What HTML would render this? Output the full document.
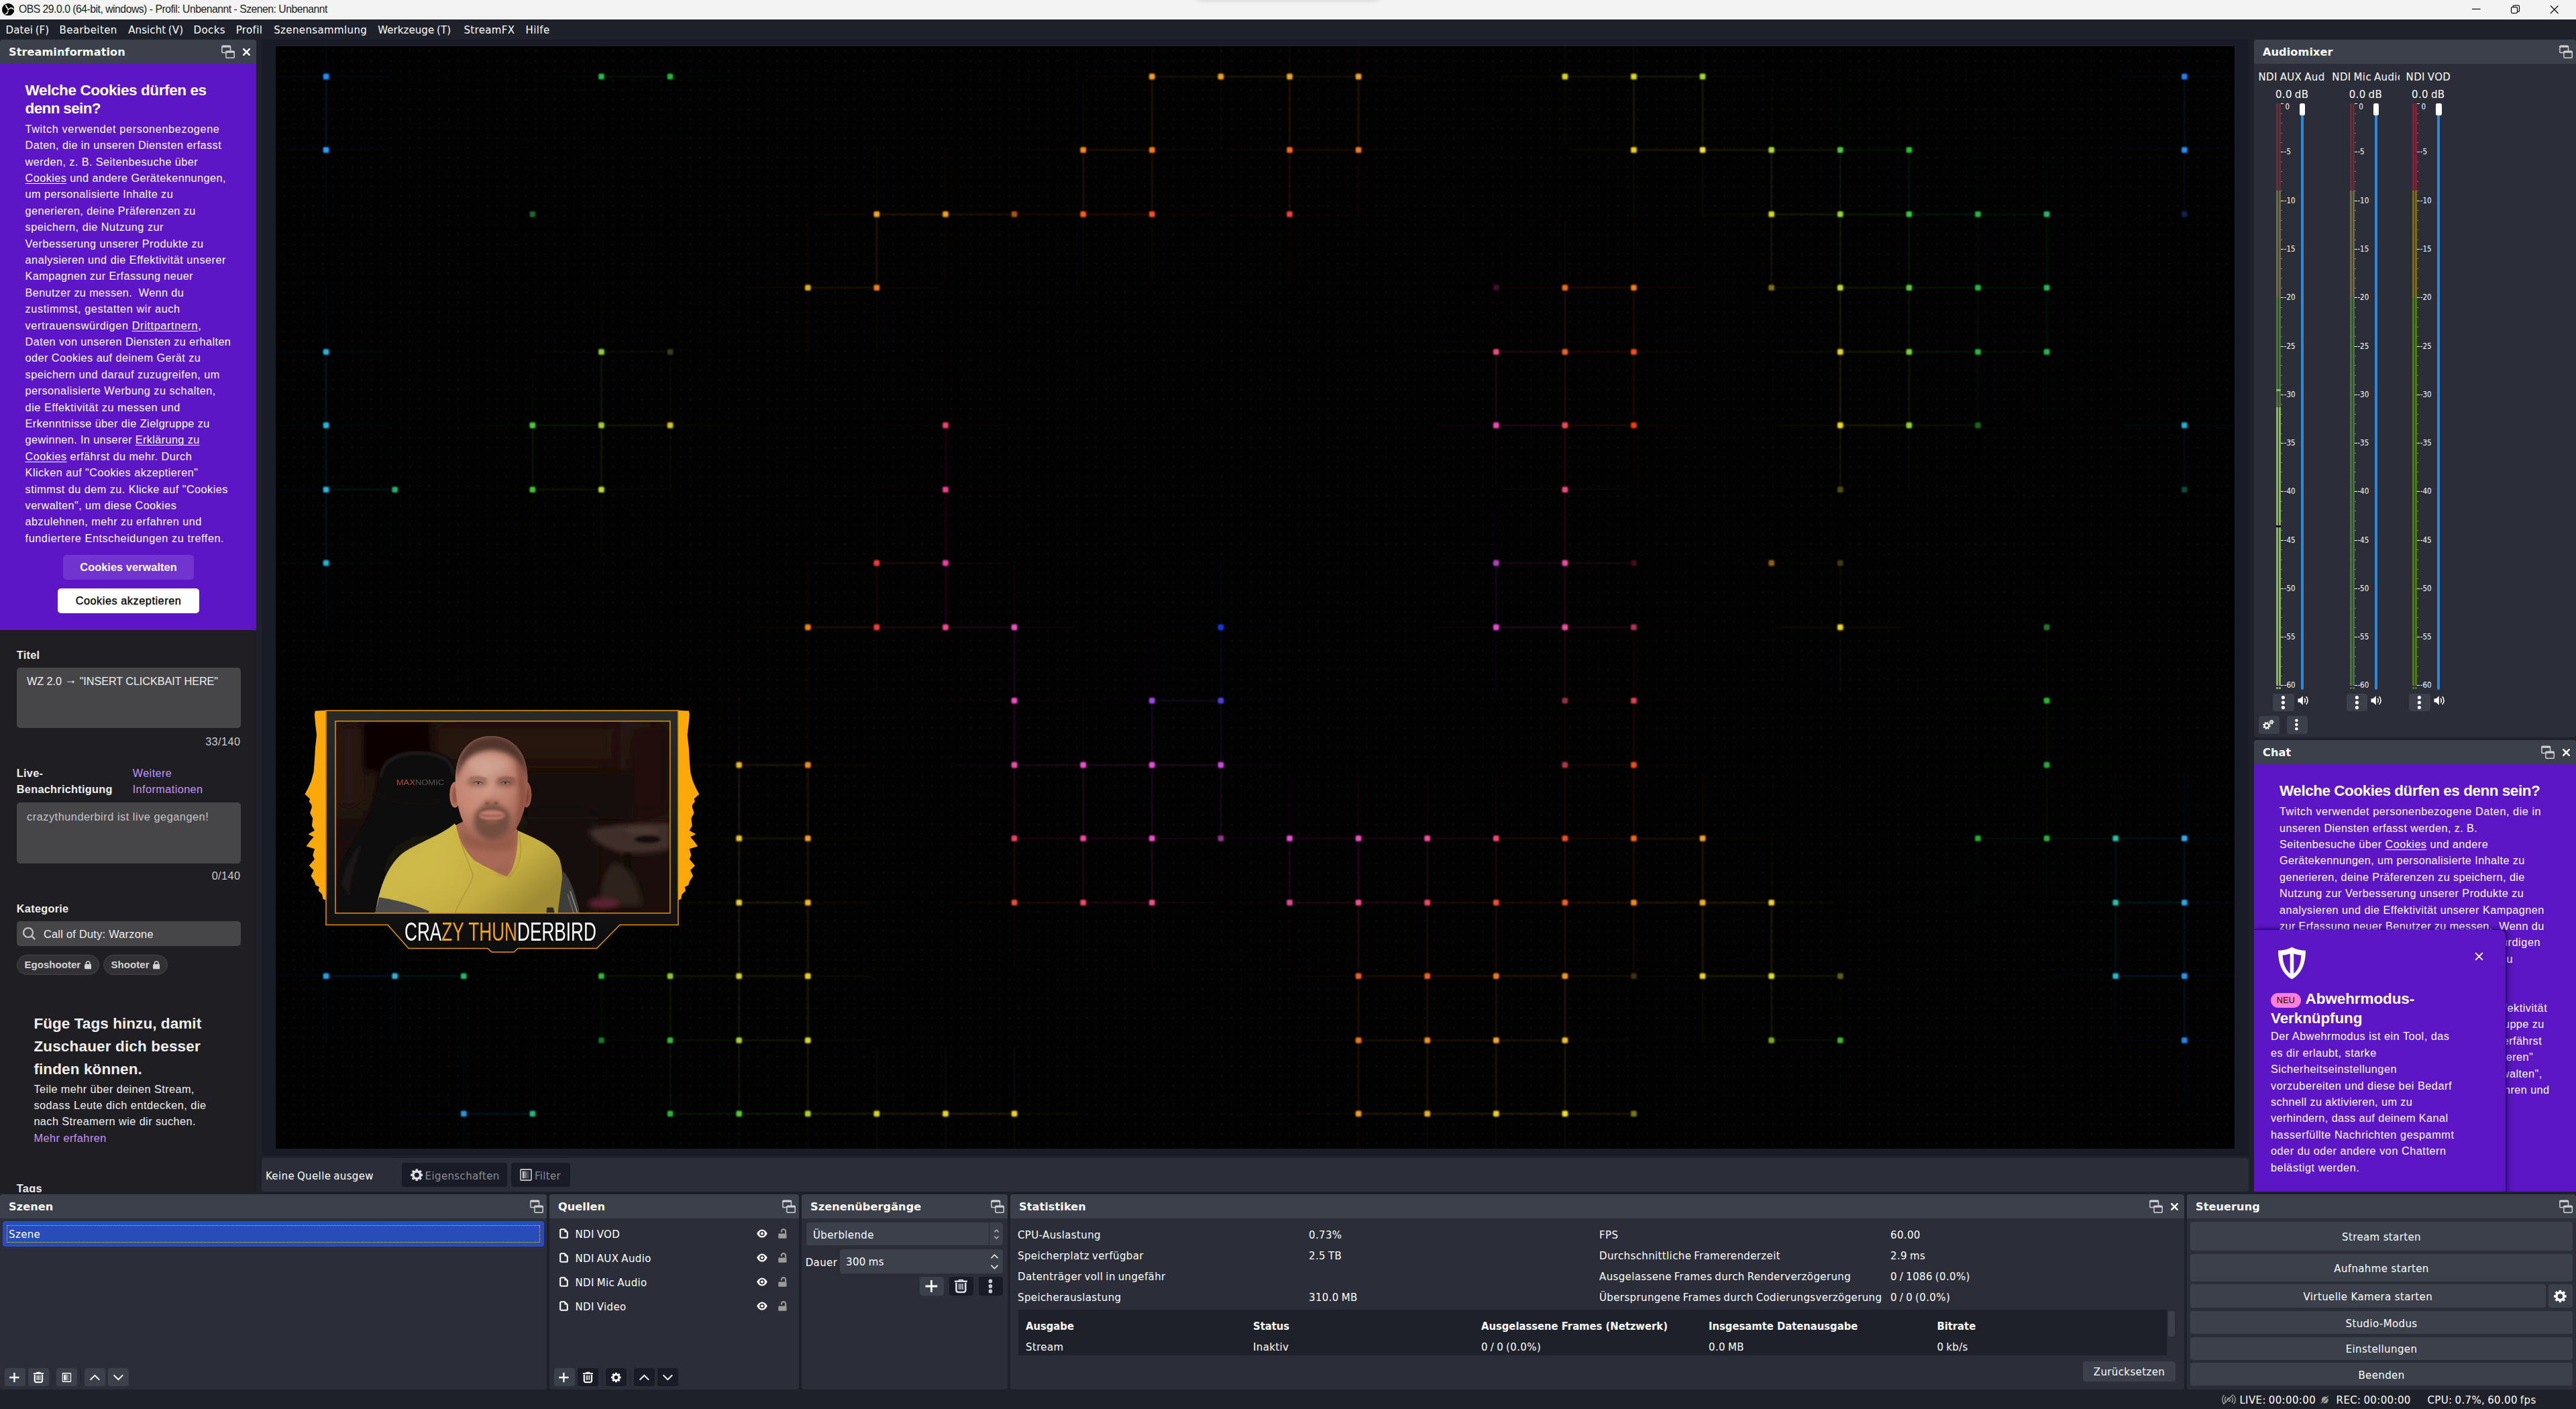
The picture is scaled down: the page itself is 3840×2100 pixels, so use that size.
<!DOCTYPE html>
<html lang="de"><head><meta charset="utf-8"><title>OBS 29.0.0</title>
<style>
*{box-sizing:border-box;margin:0;padding:0}
html,body{width:3840px;height:2100px;overflow:hidden;background:#1f212a}
body{position:relative;font-family:"DejaVu Sans Condensed","Liberation Sans",sans-serif;font-size:16.67px;color:#fefefe;-webkit-font-smoothing:antialiased}
.a{position:absolute}
.t{position:absolute;white-space:nowrap;line-height:22px;letter-spacing:.38px;word-spacing:-1.2px}
.b{font-family:"DejaVu Sans Condensed","Liberation Sans",sans-serif;font-weight:700;font-size:16.45px;letter-spacing:0;word-spacing:0}
.dt{position:absolute;background:#3c404b;border-radius:4px 4px 0 0;height:36px}
.dt span{position:absolute;left:13px;top:9px;line-height:20px;white-space:nowrap;font-family:"DejaVu Sans","Liberation Sans",sans-serif;font-weight:700;font-size:16.1px;letter-spacing:.1px}
.db{position:absolute;background:#2b2e38;border-radius:0 0 4px 4px}
.btn{position:absolute;background:#3c404b;border-radius:4px;text-align:center;white-space:nowrap;letter-spacing:.38px}
.ib{position:absolute;background:#3c404b;border-radius:4px}
.ib svg{position:absolute;left:50%;top:50%;transform:translate(calc(-50% - .6px),-50%)}
.sep{position:absolute;width:1px;background:#1f212a}
.tw{font-family:"Liberation Sans",sans-serif;font-size:16.25px;line-height:24.4px;letter-spacing:.42px;color:#fff;white-space:nowrap}
.tw u{text-underline-offset:2px;text-decoration-thickness:1px}
.twh{font-family:"Liberation Sans",sans-serif;font-weight:700;color:#fff;white-space:nowrap}
.tk{position:absolute;font-size:11.5px;line-height:12px;letter-spacing:0;white-space:nowrap;color:#fefefe}
</style></head>
<body>
<div class="a" style="left:0;top:0;width:3840px;height:28.600px;background:#f3f3f3;border-bottom:1px solid #fbfbfb;overflow:hidden">
<div class="a" style="left:1785px;top:-8px;width:270px;height:8px;border-radius:4px;box-shadow:0 0 7px 1px rgba(0,0,0,.13)"></div></div>
<svg class="a" style="left:2.800px;top:4.800px" width="18.400" height="18.400" viewBox="0 0 100 100"><circle cx="50" cy="50" r="50" fill="#050505"/><g fill="none" stroke="#f3f3f3" stroke-linecap="round"><path d="M50 51C50 38 38 36 30 14" stroke-width="6.500"/><path d="M33 22C34 30 40 36 46 40" stroke-width="9"/><path d="M50 51C60 40 76 30 95 49" stroke-width="6"/><path d="M70 37C78 36 86 40 90 45" stroke-width="8"/><path d="M50 51C50 66 46 80 27 87" stroke-width="6"/><path d="M46 74C42 80 36 84 31 86" stroke-width="8"/></g></svg>
<div class="a" style="left:28px;top:3.600px;font-family:'Liberation Sans',sans-serif;font-size:15.700px;line-height:20px;color:#1c1c1c;white-space:nowrap;letter-spacing:-.470px">OBS 29.0.0 (64-bit, windows) - Profil: Unbenannt - Szenen: Unbenannt</div>
<svg class="a" style="left:3670px;top:0" width="170" height="29" viewBox="0 0 170 29"><g fill="none" stroke="#111" stroke-width="1.250"><path d="M15 13.500h12.500"/><rect x="73.5" y="10.5" width="9" height="9" rx="1.8"/><path d="M76 10.5v-0.7a1.8 1.8 0 0 1 1.8 -1.8h5.9a1.8 1.8 0 0 1 1.8 1.8v5.9a1.8 1.8 0 0 1 -1.8 1.8h-1.2"/><path d="M132 8.5l11.5 11.5M143.5 8.5l-11.5 11.5"/></g></svg>
<div class="t" style="left:8.5px;top:34px;letter-spacing:.1px">Datei (F)</div>
<div class="t" style="left:88.5px;top:34px">Bearbeiten</div>
<div class="t" style="left:191.2px;top:34px;letter-spacing:.1px">Ansicht (V)</div>
<div class="t" style="left:288.6px;top:34px">Docks</div>
<div class="t" style="left:351.7px;top:34px">Profil</div>
<div class="t" style="left:408.2px;top:34px">Szenensammlung</div>
<div class="t" style="left:563.2px;top:34px;letter-spacing:.1px">Werkzeuge (T)</div>
<div class="t" style="left:691.4px;top:34px">StreamFX</div>
<div class="t" style="left:783.5px;top:34px">Hilfe</div>
<div class="a" style="left:390px;top:59px;width:2962px;height:1663px;background:#191b26"></div>
<div class="a" style="left:411px;top:69px;width:2920px;height:1643px;background-color:#020202;background-image:radial-gradient(circle,#0b0b0b 0,#0b0b0b .9px,rgba(0,0,0,0) 2px);background-size:14.41px 14.41px;background-position:5.7px .2px"></div>
<svg class="a" style="left:411px;top:69px" width="2920" height="1643" viewBox="411 69 2920 1643"><defs><filter id="dbl" x="-5%" y="-5%" width="110%" height="110%"><feGaussianBlur stdDeviation="0.8"/></filter></defs><g fill="none" stroke-width="2.2" filter="url(#dbl)"><path d="M486.1 114.1L581.1 114.1M486.1 114.1L391.1 114.1M486.1 114.1L486.1 214.1M486.1 114.1L486.1 14.1" stroke="#1e90ff" opacity="0.055"/><path d="M486.1 114.1L486.1 223.5" stroke="#1e90ff" opacity="0.07"/><path d="M896.5 114.1L991.5 114.1M896.5 114.1L801.5 114.1M896.5 114.1L896.5 214.1M896.5 114.1L896.5 14.1" stroke="#2fb84a" opacity="0.04"/><path d="M896.5 114.1L999.1 114.1" stroke="#2fb84a" opacity="0.051"/><path d="M999.1 114.1L1094.1 114.1M999.1 114.1L904.1 114.1M999.1 114.1L999.1 214.1M999.1 114.1L999.1 14.1" stroke="#22b53a" opacity="0.039"/><path d="M1717.3 114.1L1812.3 114.1M1717.3 114.1L1622.3 114.1M1717.3 114.1L1717.3 214.1M1717.3 114.1L1717.3 14.1M1819.9 114.1L1914.9 114.1M1819.9 114.1L1724.9 114.1M1819.9 114.1L1819.9 214.1M1819.9 114.1L1819.9 14.1M1409.5 319.3L1504.5 319.3M1409.5 319.3L1314.5 319.3M1409.5 319.3L1409.5 419.3M1409.5 319.3L1409.5 219.3M1204.3 1249.5L1299.3 1249.5M1204.3 1249.5L1109.3 1249.5M1204.3 1249.5L1204.3 1349.5M1204.3 1249.5L1204.3 1149.5M2025.1 1659.9L2120.1 1659.9M2025.1 1659.9L1930.1 1659.9M2025.1 1659.9L2025.1 1759.9M2025.1 1659.9L2025.1 1559.9" stroke="#f0a020" opacity="0.052"/><path d="M1717.3 114.1L1819.9 114.1M1717.3 114.1L1717.3 223.5M1819.9 114.1L1922.5 114.1M1409.5 319.3L1512.1 319.3M1204.3 1249.5L1204.3 1345.3M2025.1 1659.9L2127.7 1659.9" stroke="#f0a020" opacity="0.066"/><path d="M1922.5 114.1L2017.5 114.1M1922.5 114.1L1827.5 114.1M1922.5 114.1L1922.5 214.1M1922.5 114.1L1922.5 14.1M2025.1 114.1L2120.1 114.1M2025.1 114.1L1930.1 114.1M2025.1 114.1L2025.1 214.1M2025.1 114.1L2025.1 14.1" stroke="#f0a428" opacity="0.052"/><path d="M1922.5 114.1L2025.1 114.1M1922.5 114.1L1922.5 223.5M2025.1 114.1L2025.1 223.5" stroke="#f0a428" opacity="0.066"/><path d="M2332.9 114.1L2427.9 114.1M2332.9 114.1L2237.9 114.1M2332.9 114.1L2332.9 214.1M2332.9 114.1L2332.9 14.1M2435.5 114.1L2530.5 114.1M2435.5 114.1L2340.5 114.1M2435.5 114.1L2435.5 214.1M2435.5 114.1L2435.5 14.1" stroke="#d8d820" opacity="0.047"/><path d="M2332.9 114.1L2435.5 114.1M2435.5 114.1L2538.1 114.1M2435.5 114.1L2435.5 223.5" stroke="#d8d820" opacity="0.059"/><path d="M2538.1 114.1L2633.1 114.1M2538.1 114.1L2443.1 114.1M2538.1 114.1L2538.1 214.1M2538.1 114.1L2538.1 14.1" stroke="#a0d830" opacity="0.047"/><path d="M2538.1 114.1L2538.1 223.5" stroke="#a0d830" opacity="0.059"/><path d="M3256.3 114.1L3351.3 114.1M3256.3 114.1L3161.3 114.1M3256.3 114.1L3256.3 214.1M3256.3 114.1L3256.3 14.1" stroke="#2080f0" opacity="0.052"/><path d="M3256.3 114.1L3256.3 223.5" stroke="#2080f0" opacity="0.066"/><path d="M486.1 223.5L581.1 223.5M486.1 223.5L391.1 223.5M486.1 223.5L486.1 323.5M486.1 223.5L486.1 123.5" stroke="#2a9dff" opacity="0.055"/><path d="M1614.7 223.5L1709.7 223.5M1614.7 223.5L1519.7 223.5M1614.7 223.5L1614.7 323.5M1614.7 223.5L1614.7 123.5" stroke="#f58a1a" opacity="0.053"/><path d="M1614.7 223.5L1717.3 223.5M1614.7 223.5L1614.7 319.3" stroke="#f58a1a" opacity="0.067"/><path d="M1717.3 223.5L1812.3 223.5M1717.3 223.5L1622.3 223.5M1717.3 223.5L1717.3 323.5M1717.3 223.5L1717.3 123.5M2025.1 223.5L2120.1 223.5M2025.1 223.5L1930.1 223.5M2025.1 223.5L2025.1 323.5M2025.1 223.5L2025.1 123.5" stroke="#f5781a" opacity="0.053"/><path d="M1717.3 223.5L1717.3 319.3" stroke="#f5781a" opacity="0.067"/><path d="M1922.5 223.5L2017.5 223.5M1922.5 223.5L1827.5 223.5M1922.5 223.5L1922.5 323.5M1922.5 223.5L1922.5 123.5" stroke="#f56a1a" opacity="0.053"/><path d="M1922.5 223.5L2025.1 223.5M1922.5 223.5L1922.5 319.3" stroke="#f56a1a" opacity="0.067"/><path d="M2435.5 223.5L2530.5 223.5M2435.5 223.5L2340.5 223.5M2435.5 223.5L2435.5 323.5M2435.5 223.5L2435.5 123.5" stroke="#f0d020" opacity="0.052"/><path d="M2435.5 223.5L2538.1 223.5" stroke="#f0d020" opacity="0.066"/><path d="M2538.1 223.5L2633.1 223.5M2538.1 223.5L2443.1 223.5M2538.1 223.5L2538.1 323.5M2538.1 223.5L2538.1 123.5" stroke="#f0e040" opacity="0.052"/><path d="M2538.1 223.5L2640.7 223.5" stroke="#f0e040" opacity="0.066"/><path d="M2640.7 223.5L2735.7 223.5M2640.7 223.5L2545.7 223.5M2640.7 223.5L2640.7 323.5M2640.7 223.5L2640.7 123.5" stroke="#b0d838" opacity="0.047"/><path d="M2640.7 223.5L2743.3 223.5M2640.7 223.5L2640.7 319.3" stroke="#b0d838" opacity="0.059"/><path d="M2743.3 223.5L2838.3 223.5M2743.3 223.5L2648.3 223.5M2743.3 223.5L2743.3 323.5M2743.3 223.5L2743.3 123.5" stroke="#50c840" opacity="0.043"/><path d="M2743.3 223.5L2845.9 223.5M2743.3 223.5L2743.3 319.3" stroke="#50c840" opacity="0.055"/><path d="M2845.9 223.5L2940.9 223.5M2845.9 223.5L2750.9 223.5M2845.9 223.5L2845.9 323.5M2845.9 223.5L2845.9 123.5" stroke="#28c038" opacity="0.041"/><path d="M2845.9 223.5L2845.9 319.3" stroke="#28c038" opacity="0.053"/><path d="M3256.3 223.5L3351.3 223.5M3256.3 223.5L3161.3 223.5M3256.3 223.5L3256.3 323.5M3256.3 223.5L3256.3 123.5" stroke="#2090f0" opacity="0.052"/><path d="M3256.3 223.5L3256.3 319.3" stroke="#2090f0" opacity="0.066"/><path d="M793.9 319.3L888.9 319.3M793.9 319.3L698.9 319.3M793.9 319.3L793.9 419.3M793.9 319.3L793.9 219.3" stroke="#1f6b2a" opacity="0.023"/><path d="M1306.9 319.3L1401.9 319.3M1306.9 319.3L1211.9 319.3M1306.9 319.3L1306.9 419.3M1306.9 319.3L1306.9 219.3" stroke="#f5a623" opacity="0.053"/><path d="M1306.9 319.3L1409.5 319.3M1306.9 319.3L1306.9 428.7" stroke="#f5a623" opacity="0.067"/><path d="M1512.1 319.3L1607.1 319.3M1512.1 319.3L1417.1 319.3M1512.1 319.3L1512.1 419.3M1512.1 319.3L1512.1 219.3" stroke="#b05010" opacity="0.038"/><path d="M1512.1 319.3L1614.7 319.3" stroke="#b05010" opacity="0.048"/><path d="M1614.7 319.3L1709.7 319.3M1614.7 319.3L1519.7 319.3M1614.7 319.3L1614.7 419.3M1614.7 319.3L1614.7 219.3" stroke="#f5601a" opacity="0.053"/><path d="M1614.7 319.3L1717.3 319.3" stroke="#f5601a" opacity="0.067"/><path d="M1717.3 319.3L1812.3 319.3M1717.3 319.3L1622.3 319.3M1717.3 319.3L1717.3 419.3M1717.3 319.3L1717.3 219.3" stroke="#f5502a" opacity="0.053"/><path d="M1922.5 319.3L2017.5 319.3M1922.5 319.3L1827.5 319.3M1922.5 319.3L1922.5 419.3M1922.5 319.3L1922.5 219.3" stroke="#f04040" opacity="0.052"/><path d="M2640.7 319.3L2735.7 319.3M2640.7 319.3L2545.7 319.3M2640.7 319.3L2640.7 419.3M2640.7 319.3L2640.7 219.3" stroke="#d8d828" opacity="0.047"/><path d="M2640.7 319.3L2743.3 319.3M2640.7 319.3L2640.7 428.7" stroke="#d8d828" opacity="0.059"/><path d="M2743.3 319.3L2838.3 319.3M2743.3 319.3L2648.3 319.3M2743.3 319.3L2743.3 419.3M2743.3 319.3L2743.3 219.3" stroke="#90d838" opacity="0.047"/><path d="M2743.3 319.3L2845.9 319.3M2743.3 319.3L2743.3 428.7" stroke="#90d838" opacity="0.059"/><path d="M2845.9 319.3L2940.9 319.3M2845.9 319.3L2750.9 319.3M2845.9 319.3L2845.9 419.3M2845.9 319.3L2845.9 219.3" stroke="#30c840" opacity="0.043"/><path d="M2845.9 319.3L2948.5 319.3M2845.9 319.3L2845.9 428.7" stroke="#30c840" opacity="0.055"/><path d="M2948.5 319.3L3043.5 319.3M2948.5 319.3L2853.5 319.3M2948.5 319.3L2948.5 419.3M2948.5 319.3L2948.5 219.3M2948.5 428.7L3043.5 428.7M2948.5 428.7L2853.5 428.7M2948.5 428.7L2948.5 528.7M2948.5 428.7L2948.5 328.7" stroke="#20b840" opacity="0.04"/><path d="M2948.5 319.3L3051.1 319.3M2948.5 319.3L2948.5 428.7M2948.5 428.7L3051.1 428.7M2948.5 428.7L2948.5 524.5" stroke="#20b840" opacity="0.051"/><path d="M3051.1 319.3L3146.1 319.3M3051.1 319.3L2956.1 319.3M3051.1 319.3L3051.1 419.3M3051.1 319.3L3051.1 219.3" stroke="#20b870" opacity="0.04"/><path d="M3051.1 319.3L3051.1 428.7" stroke="#20b870" opacity="0.051"/><path d="M3256.3 319.3L3351.3 319.3M3256.3 319.3L3161.3 319.3M3256.3 319.3L3256.3 419.3M3256.3 319.3L3256.3 219.3" stroke="#102050" opacity="0.017"/><path d="M1204.3 428.7L1299.3 428.7M1204.3 428.7L1109.3 428.7M1204.3 428.7L1204.3 528.7M1204.3 428.7L1204.3 328.7" stroke="#e0b020" opacity="0.048"/><path d="M1204.3 428.7L1306.9 428.7" stroke="#e0b020" opacity="0.061"/><path d="M1306.9 428.7L1401.9 428.7M1306.9 428.7L1211.9 428.7M1306.9 428.7L1306.9 528.7M1306.9 428.7L1306.9 328.7" stroke="#f57c1a" opacity="0.053"/><path d="M2230.3 428.7L2325.3 428.7M2230.3 428.7L2135.3 428.7M2230.3 428.7L2230.3 528.7M2230.3 428.7L2230.3 328.7" stroke="#401030" opacity="0.014"/><path d="M2230.3 428.7L2332.9 428.7M2230.3 428.7L2230.3 524.5" stroke="#401030" opacity="0.018"/><path d="M2332.9 428.7L2427.9 428.7M2332.9 428.7L2237.9 428.7M2332.9 428.7L2332.9 528.7M2332.9 428.7L2332.9 328.7" stroke="#f06a1a" opacity="0.052"/><path d="M2332.9 428.7L2435.5 428.7M2332.9 428.7L2332.9 524.5" stroke="#f06a1a" opacity="0.066"/><path d="M2435.5 428.7L2530.5 428.7M2435.5 428.7L2340.5 428.7M2435.5 428.7L2435.5 528.7M2435.5 428.7L2435.5 328.7" stroke="#f07a1a" opacity="0.052"/><path d="M2435.5 428.7L2435.5 524.5" stroke="#f07a1a" opacity="0.066"/><path d="M2640.7 428.7L2735.7 428.7M2640.7 428.7L2545.7 428.7M2640.7 428.7L2640.7 528.7M2640.7 428.7L2640.7 328.7" stroke="#807018" opacity="0.028"/><path d="M2640.7 428.7L2743.3 428.7" stroke="#807018" opacity="0.035"/><path d="M2743.3 428.7L2838.3 428.7M2743.3 428.7L2648.3 428.7M2743.3 428.7L2743.3 528.7M2743.3 428.7L2743.3 328.7" stroke="#c0d838" opacity="0.047"/><path d="M2743.3 428.7L2845.9 428.7M2743.3 428.7L2743.3 524.5" stroke="#c0d838" opacity="0.059"/><path d="M2845.9 428.7L2940.9 428.7M2845.9 428.7L2750.9 428.7M2845.9 428.7L2845.9 528.7M2845.9 428.7L2845.9 328.7" stroke="#60c838" opacity="0.043"/><path d="M2845.9 428.7L2948.5 428.7M2845.9 428.7L2845.9 524.5" stroke="#60c838" opacity="0.055"/><path d="M3051.1 428.7L3146.1 428.7M3051.1 428.7L2956.1 428.7M3051.1 428.7L3051.1 528.7M3051.1 428.7L3051.1 328.7" stroke="#20b850" opacity="0.04"/><path d="M3051.1 428.7L3051.1 524.5" stroke="#20b850" opacity="0.051"/><path d="M486.1 524.5L581.1 524.5M486.1 524.5L391.1 524.5M486.1 524.5L486.1 624.5M486.1 524.5L486.1 424.5" stroke="#28b4e0" opacity="0.048"/><path d="M486.1 524.5L486.1 633.9" stroke="#28b4e0" opacity="0.061"/><path d="M896.5 524.5L991.5 524.5M896.5 524.5L801.5 524.5M896.5 524.5L896.5 624.5M896.5 524.5L896.5 424.5" stroke="#8ccf3a" opacity="0.045"/><path d="M896.5 524.5L999.1 524.5M896.5 524.5L896.5 633.9" stroke="#8ccf3a" opacity="0.057"/><path d="M999.1 524.5L1094.1 524.5M999.1 524.5L904.1 524.5M999.1 524.5L999.1 624.5M999.1 524.5L999.1 424.5" stroke="#3a3a20" opacity="0.013"/><path d="M999.1 524.5L999.1 633.9" stroke="#3a3a20" opacity="0.016"/><path d="M2230.3 524.5L2325.3 524.5M2230.3 524.5L2135.3 524.5M2230.3 524.5L2230.3 624.5M2230.3 524.5L2230.3 424.5" stroke="#f04a80" opacity="0.052"/><path d="M2230.3 524.5L2332.9 524.5M2230.3 524.5L2230.3 633.9" stroke="#f04a80" opacity="0.066"/><path d="M2332.9 524.5L2427.9 524.5M2332.9 524.5L2237.9 524.5M2332.9 524.5L2332.9 624.5M2332.9 524.5L2332.9 424.5" stroke="#f0602a" opacity="0.052"/><path d="M2332.9 524.5L2435.5 524.5M2332.9 524.5L2332.9 633.9" stroke="#f0602a" opacity="0.066"/><path d="M2435.5 524.5L2530.5 524.5M2435.5 524.5L2340.5 524.5M2435.5 524.5L2435.5 624.5M2435.5 524.5L2435.5 424.5" stroke="#f0501a" opacity="0.052"/><path d="M2435.5 524.5L2435.5 633.9" stroke="#f0501a" opacity="0.066"/><path d="M2743.3 524.5L2838.3 524.5M2743.3 524.5L2648.3 524.5M2743.3 524.5L2743.3 624.5M2743.3 524.5L2743.3 424.5M1409.5 1659.9L1504.5 1659.9M1409.5 1659.9L1314.5 1659.9M1409.5 1659.9L1409.5 1759.9M1409.5 1659.9L1409.5 1559.9" stroke="#e8d828" opacity="0.05"/><path d="M2743.3 524.5L2845.9 524.5M2743.3 524.5L2743.3 633.9M1409.5 1659.9L1512.1 1659.9" stroke="#e8d828" opacity="0.064"/><path d="M2845.9 524.5L2940.9 524.5M2845.9 524.5L2750.9 524.5M2845.9 524.5L2845.9 624.5M2845.9 524.5L2845.9 424.5" stroke="#78d038" opacity="0.045"/><path d="M2845.9 524.5L2948.5 524.5M2845.9 524.5L2845.9 633.9" stroke="#78d038" opacity="0.057"/><path d="M2948.5 524.5L3043.5 524.5M2948.5 524.5L2853.5 524.5M2948.5 524.5L2948.5 624.5M2948.5 524.5L2948.5 424.5M999.1 1659.9L1094.1 1659.9M999.1 1659.9L904.1 1659.9M999.1 1659.9L999.1 1759.9M999.1 1659.9L999.1 1559.9" stroke="#28b838" opacity="0.04"/><path d="M2948.5 524.5L3051.1 524.5M2948.5 524.5L2948.5 633.9M999.1 1659.9L1101.7 1659.9" stroke="#28b838" opacity="0.051"/><path d="M3051.1 524.5L3146.1 524.5M3051.1 524.5L2956.1 524.5M3051.1 524.5L3051.1 624.5M3051.1 524.5L3051.1 424.5" stroke="#20b848" opacity="0.04"/><path d="M486.1 633.9L581.1 633.9M486.1 633.9L391.1 633.9M486.1 633.9L486.1 733.9M486.1 633.9L486.1 533.9" stroke="#25b8dc" opacity="0.047"/><path d="M486.1 633.9L486.1 729.7" stroke="#25b8dc" opacity="0.06"/><path d="M793.9 633.9L888.9 633.9M793.9 633.9L698.9 633.9M793.9 633.9L793.9 733.9M793.9 633.9L793.9 533.9" stroke="#4fc83a" opacity="0.043"/><path d="M793.9 633.9L896.5 633.9M793.9 633.9L793.9 729.7" stroke="#4fc83a" opacity="0.055"/><path d="M896.5 633.9L991.5 633.9M896.5 633.9L801.5 633.9M896.5 633.9L896.5 733.9M896.5 633.9L896.5 533.9" stroke="#a4cf3a" opacity="0.045"/><path d="M896.5 633.9L999.1 633.9M896.5 633.9L896.5 729.7" stroke="#a4cf3a" opacity="0.057"/><path d="M999.1 633.9L1094.1 633.9M999.1 633.9L904.1 633.9M999.1 633.9L999.1 733.9M999.1 633.9L999.1 533.9" stroke="#d4c42a" opacity="0.046"/><path d="M1409.5 633.9L1504.5 633.9M1409.5 633.9L1314.5 633.9M1409.5 633.9L1409.5 733.9M1409.5 633.9L1409.5 533.9" stroke="#f04070" opacity="0.052"/><path d="M1409.5 633.9L1409.5 729.7" stroke="#f04070" opacity="0.066"/><path d="M2230.3 633.9L2325.3 633.9M2230.3 633.9L2135.3 633.9M2230.3 633.9L2230.3 733.9M2230.3 633.9L2230.3 533.9" stroke="#f048b0" opacity="0.052"/><path d="M2230.3 633.9L2332.9 633.9" stroke="#f048b0" opacity="0.066"/><path d="M2332.9 633.9L2427.9 633.9M2332.9 633.9L2237.9 633.9M2332.9 633.9L2332.9 733.9M2332.9 633.9L2332.9 533.9" stroke="#f04858" opacity="0.052"/><path d="M2332.9 633.9L2435.5 633.9M2332.9 633.9L2332.9 729.7" stroke="#f04858" opacity="0.066"/><path d="M2435.5 633.9L2530.5 633.9M2435.5 633.9L2340.5 633.9M2435.5 633.9L2435.5 733.9M2435.5 633.9L2435.5 533.9" stroke="#f03a10" opacity="0.052"/><path d="M2743.3 633.9L2838.3 633.9M2743.3 633.9L2648.3 633.9M2743.3 633.9L2743.3 733.9M2743.3 633.9L2743.3 533.9" stroke="#f0d820" opacity="0.052"/><path d="M2743.3 633.9L2845.9 633.9M2743.3 633.9L2743.3 729.7" stroke="#f0d820" opacity="0.066"/><path d="M2845.9 633.9L2940.9 633.9M2845.9 633.9L2750.9 633.9M2845.9 633.9L2845.9 733.9M2845.9 633.9L2845.9 533.9" stroke="#90d030" opacity="0.045"/><path d="M2845.9 633.9L2948.5 633.9" stroke="#90d030" opacity="0.057"/><path d="M2948.5 633.9L3043.5 633.9M2948.5 633.9L2853.5 633.9M2948.5 633.9L2948.5 733.9M2948.5 633.9L2948.5 533.9" stroke="#186818" opacity="0.022"/><path d="M3256.3 633.9L3351.3 633.9M3256.3 633.9L3161.3 633.9M3256.3 633.9L3256.3 733.9M3256.3 633.9L3256.3 533.9" stroke="#20b0d0" opacity="0.045"/><path d="M3256.3 633.9L3256.3 729.7" stroke="#20b0d0" opacity="0.057"/><path d="M486.1 729.7L581.1 729.7M486.1 729.7L391.1 729.7M486.1 729.7L486.1 829.7M486.1 729.7L486.1 629.7" stroke="#25b8d8" opacity="0.047"/><path d="M486.1 729.7L588.7 729.7M486.1 729.7L486.1 839.1" stroke="#25b8d8" opacity="0.059"/><path d="M588.7 729.7L683.7 729.7M588.7 729.7L493.7 729.7M588.7 729.7L588.7 829.7M588.7 729.7L588.7 629.7" stroke="#22b070" opacity="0.038"/><path d="M793.9 729.7L888.9 729.7M793.9 729.7L698.9 729.7M793.9 729.7L793.9 829.7M793.9 729.7L793.9 629.7" stroke="#4cc030" opacity="0.041"/><path d="M793.9 729.7L896.5 729.7" stroke="#4cc030" opacity="0.053"/><path d="M896.5 729.7L991.5 729.7M896.5 729.7L801.5 729.7M896.5 729.7L896.5 829.7M896.5 729.7L896.5 629.7" stroke="#c0d83a" opacity="0.047"/><path d="M1409.5 729.7L1504.5 729.7M1409.5 729.7L1314.5 729.7M1409.5 729.7L1409.5 829.7M1409.5 729.7L1409.5 629.7" stroke="#f04088" opacity="0.052"/><path d="M1409.5 729.7L1409.5 839.1" stroke="#f04088" opacity="0.066"/><path d="M2332.9 729.7L2427.9 729.7M2332.9 729.7L2237.9 729.7M2332.9 729.7L2332.9 829.7M2332.9 729.7L2332.9 629.7" stroke="#f04880" opacity="0.052"/><path d="M2332.9 729.7L2332.9 839.1" stroke="#f04880" opacity="0.066"/><path d="M2743.3 729.7L2838.3 729.7M2743.3 729.7L2648.3 729.7M2743.3 729.7L2743.3 829.7M2743.3 729.7L2743.3 629.7" stroke="#505010" opacity="0.017"/><path d="M2743.3 729.7L2743.3 839.1" stroke="#505010" opacity="0.022"/><path d="M3256.3 729.7L3351.3 729.7M3256.3 729.7L3161.3 729.7M3256.3 729.7L3256.3 829.7M3256.3 729.7L3256.3 629.7" stroke="#104838" opacity="0.016"/><path d="M486.1 839.1L581.1 839.1M486.1 839.1L391.1 839.1M486.1 839.1L486.1 939.1M486.1 839.1L486.1 739.1" stroke="#22b4d0" opacity="0.045"/><path d="M1306.9 839.1L1401.9 839.1M1306.9 839.1L1211.9 839.1M1306.9 839.1L1306.9 939.1M1306.9 839.1L1306.9 739.1M1306.9 934.9L1401.9 934.9M1306.9 934.9L1211.9 934.9M1306.9 934.9L1306.9 1034.9M1306.9 934.9L1306.9 834.9" stroke="#f03a3a" opacity="0.052"/><path d="M1306.9 839.1L1409.5 839.1M1306.9 839.1L1306.9 934.9M1306.9 934.9L1409.5 934.9" stroke="#f03a3a" opacity="0.066"/><path d="M1409.5 839.1L1504.5 839.1M1409.5 839.1L1314.5 839.1M1409.5 839.1L1409.5 939.1M1409.5 839.1L1409.5 739.1" stroke="#f040a0" opacity="0.052"/><path d="M1409.5 839.1L1409.5 934.9" stroke="#f040a0" opacity="0.066"/><path d="M2230.3 839.1L2325.3 839.1M2230.3 839.1L2135.3 839.1M2230.3 839.1L2230.3 939.1M2230.3 839.1L2230.3 739.1" stroke="#b040c0" opacity="0.041"/><path d="M2230.3 839.1L2332.9 839.1M2230.3 839.1L2230.3 934.9" stroke="#b040c0" opacity="0.053"/><path d="M2332.9 839.1L2427.9 839.1M2332.9 839.1L2237.9 839.1M2332.9 839.1L2332.9 939.1M2332.9 839.1L2332.9 739.1M1614.7 1249.5L1709.7 1249.5M1614.7 1249.5L1519.7 1249.5M1614.7 1249.5L1614.7 1349.5M1614.7 1249.5L1614.7 1149.5" stroke="#f048a0" opacity="0.052"/><path d="M2332.9 839.1L2435.5 839.1M2332.9 839.1L2332.9 934.9M1614.7 1249.5L1717.3 1249.5M1614.7 1249.5L1614.7 1345.3" stroke="#f048a0" opacity="0.066"/><path d="M2435.5 839.1L2530.5 839.1M2435.5 839.1L2340.5 839.1M2435.5 839.1L2435.5 939.1M2435.5 839.1L2435.5 739.1" stroke="#401018" opacity="0.014"/><path d="M2435.5 839.1L2435.5 934.9" stroke="#401018" opacity="0.018"/><path d="M2640.7 839.1L2735.7 839.1M2640.7 839.1L2545.7 839.1M2640.7 839.1L2640.7 939.1M2640.7 839.1L2640.7 739.1" stroke="#906018" opacity="0.031"/><path d="M2640.7 839.1L2743.3 839.1" stroke="#906018" opacity="0.04"/><path d="M2743.3 839.1L2838.3 839.1M2743.3 839.1L2648.3 839.1M2743.3 839.1L2743.3 939.1M2743.3 839.1L2743.3 739.1" stroke="#403818" opacity="0.014"/><path d="M2743.3 839.1L2743.3 934.9" stroke="#403818" opacity="0.018"/><path d="M1204.3 934.9L1299.3 934.9M1204.3 934.9L1109.3 934.9M1204.3 934.9L1204.3 1034.9M1204.3 934.9L1204.3 834.9" stroke="#f0801a" opacity="0.052"/><path d="M1204.3 934.9L1306.9 934.9" stroke="#f0801a" opacity="0.066"/><path d="M1409.5 934.9L1504.5 934.9M1409.5 934.9L1314.5 934.9M1409.5 934.9L1409.5 1034.9M1409.5 934.9L1409.5 834.9" stroke="#f04890" opacity="0.052"/><path d="M1409.5 934.9L1512.1 934.9" stroke="#f04890" opacity="0.066"/><path d="M1512.1 934.9L1607.1 934.9M1512.1 934.9L1417.1 934.9M1512.1 934.9L1512.1 1034.9M1512.1 934.9L1512.1 834.9M1512.1 1044.3L1607.1 1044.3M1512.1 1044.3L1417.1 1044.3M1512.1 1044.3L1512.1 1144.3M1512.1 1044.3L1512.1 944.3M2025.1 1249.5L2120.1 1249.5M2025.1 1249.5L1930.1 1249.5M2025.1 1249.5L2025.1 1349.5M2025.1 1249.5L2025.1 1149.5" stroke="#f050c0" opacity="0.052"/><path d="M1512.1 934.9L1512.1 1044.3M1512.1 1044.3L1512.1 1140.1M2025.1 1249.5L2127.7 1249.5M2025.1 1249.5L2025.1 1345.3" stroke="#f050c0" opacity="0.066"/><path d="M1819.9 934.9L1914.9 934.9M1819.9 934.9L1724.9 934.9M1819.9 934.9L1819.9 1034.9M1819.9 934.9L1819.9 834.9" stroke="#1838e0" opacity="0.048"/><path d="M1819.9 934.9L1819.9 1044.3" stroke="#1838e0" opacity="0.061"/><path d="M2230.3 934.9L2325.3 934.9M2230.3 934.9L2135.3 934.9M2230.3 934.9L2230.3 1034.9M2230.3 934.9L2230.3 834.9" stroke="#e848d0" opacity="0.05"/><path d="M2230.3 934.9L2332.9 934.9" stroke="#e848d0" opacity="0.064"/><path d="M2332.9 934.9L2427.9 934.9M2332.9 934.9L2237.9 934.9M2332.9 934.9L2332.9 1034.9M2332.9 934.9L2332.9 834.9" stroke="#f050a0" opacity="0.052"/><path d="M2332.9 934.9L2435.5 934.9M2332.9 934.9L2332.9 1044.3" stroke="#f050a0" opacity="0.066"/><path d="M2435.5 934.9L2530.5 934.9M2435.5 934.9L2340.5 934.9M2435.5 934.9L2435.5 1034.9M2435.5 934.9L2435.5 834.9" stroke="#b03058" opacity="0.038"/><path d="M2435.5 934.9L2435.5 1044.3" stroke="#b03058" opacity="0.048"/><path d="M2743.3 934.9L2838.3 934.9M2743.3 934.9L2648.3 934.9M2743.3 934.9L2743.3 1034.9M2743.3 934.9L2743.3 834.9" stroke="#f0d828" opacity="0.052"/><path d="M3051.1 934.9L3146.1 934.9M3051.1 934.9L2956.1 934.9M3051.1 934.9L3051.1 1034.9M3051.1 934.9L3051.1 834.9" stroke="#207820" opacity="0.026"/><path d="M3051.1 934.9L3051.1 1044.3" stroke="#207820" opacity="0.033"/><path d="M1717.3 1044.3L1812.3 1044.3M1717.3 1044.3L1622.3 1044.3M1717.3 1044.3L1717.3 1144.3M1717.3 1044.3L1717.3 944.3" stroke="#a048e0" opacity="0.048"/><path d="M1717.3 1044.3L1819.9 1044.3M1717.3 1044.3L1717.3 1140.1" stroke="#a048e0" opacity="0.061"/><path d="M1819.9 1044.3L1914.9 1044.3M1819.9 1044.3L1724.9 1044.3M1819.9 1044.3L1819.9 1144.3M1819.9 1044.3L1819.9 944.3" stroke="#5040e0" opacity="0.048"/><path d="M1819.9 1044.3L1819.9 1140.1" stroke="#5040e0" opacity="0.061"/><path d="M2332.9 1044.3L2427.9 1044.3M2332.9 1044.3L2237.9 1044.3M2332.9 1044.3L2332.9 1144.3M2332.9 1044.3L2332.9 944.3" stroke="#903048" opacity="0.031"/><path d="M2332.9 1044.3L2435.5 1044.3M2332.9 1044.3L2332.9 1140.1" stroke="#903048" opacity="0.04"/><path d="M2435.5 1044.3L2530.5 1044.3M2435.5 1044.3L2340.5 1044.3M2435.5 1044.3L2435.5 1144.3M2435.5 1044.3L2435.5 944.3" stroke="#e04058" opacity="0.048"/><path d="M2435.5 1044.3L2435.5 1140.1" stroke="#e04058" opacity="0.061"/><path d="M3051.1 1044.3L3146.1 1044.3M3051.1 1044.3L2956.1 1044.3M3051.1 1044.3L3051.1 1144.3M3051.1 1044.3L3051.1 944.3" stroke="#28b830" opacity="0.04"/><path d="M3051.1 1044.3L3051.1 1140.1" stroke="#28b830" opacity="0.051"/><path d="M1101.7 1140.1L1196.7 1140.1M1101.7 1140.1L1006.7 1140.1M1101.7 1140.1L1101.7 1240.1M1101.7 1140.1L1101.7 1040.1" stroke="#e8b828" opacity="0.05"/><path d="M1101.7 1140.1L1204.3 1140.1M1101.7 1140.1L1101.7 1249.5" stroke="#e8b828" opacity="0.064"/><path d="M1204.3 1140.1L1299.3 1140.1M1204.3 1140.1L1109.3 1140.1M1204.3 1140.1L1204.3 1240.1M1204.3 1140.1L1204.3 1040.1" stroke="#f08a20" opacity="0.052"/><path d="M1204.3 1140.1L1204.3 1249.5" stroke="#f08a20" opacity="0.066"/><path d="M1512.1 1140.1L1607.1 1140.1M1512.1 1140.1L1417.1 1140.1M1512.1 1140.1L1512.1 1240.1M1512.1 1140.1L1512.1 1040.1" stroke="#f050b0" opacity="0.052"/><path d="M1512.1 1140.1L1614.7 1140.1M1512.1 1140.1L1512.1 1249.5" stroke="#f050b0" opacity="0.066"/><path d="M1614.7 1140.1L1709.7 1140.1M1614.7 1140.1L1519.7 1140.1M1614.7 1140.1L1614.7 1240.1M1614.7 1140.1L1614.7 1040.1" stroke="#f050d0" opacity="0.052"/><path d="M1614.7 1140.1L1717.3 1140.1M1614.7 1140.1L1614.7 1249.5" stroke="#f050d0" opacity="0.066"/><path d="M1717.3 1140.1L1812.3 1140.1M1717.3 1140.1L1622.3 1140.1M1717.3 1140.1L1717.3 1240.1M1717.3 1140.1L1717.3 1040.1" stroke="#e850d8" opacity="0.05"/><path d="M1717.3 1140.1L1819.9 1140.1M1717.3 1140.1L1717.3 1249.5" stroke="#e850d8" opacity="0.064"/><path d="M1819.9 1140.1L1914.9 1140.1M1819.9 1140.1L1724.9 1140.1M1819.9 1140.1L1819.9 1240.1M1819.9 1140.1L1819.9 1040.1" stroke="#d048e0" opacity="0.048"/><path d="M1819.9 1140.1L1819.9 1249.5" stroke="#d048e0" opacity="0.061"/><path d="M2332.9 1140.1L2427.9 1140.1M2332.9 1140.1L2237.9 1140.1M2332.9 1140.1L2332.9 1240.1M2332.9 1140.1L2332.9 1040.1" stroke="#b03848" opacity="0.038"/><path d="M2332.9 1140.1L2435.5 1140.1M2332.9 1140.1L2332.9 1249.5" stroke="#b03848" opacity="0.048"/><path d="M2435.5 1140.1L2530.5 1140.1M2435.5 1140.1L2340.5 1140.1M2435.5 1140.1L2435.5 1240.1M2435.5 1140.1L2435.5 1040.1" stroke="#f05020" opacity="0.052"/><path d="M2435.5 1140.1L2435.5 1249.5" stroke="#f05020" opacity="0.066"/><path d="M3051.1 1140.1L3146.1 1140.1M3051.1 1140.1L2956.1 1140.1M3051.1 1140.1L3051.1 1240.1M3051.1 1140.1L3051.1 1040.1" stroke="#28a838" opacity="0.036"/><path d="M3051.1 1140.1L3051.1 1249.5" stroke="#28a838" opacity="0.046"/><path d="M1101.7 1249.5L1196.7 1249.5M1101.7 1249.5L1006.7 1249.5M1101.7 1249.5L1101.7 1349.5M1101.7 1249.5L1101.7 1149.5" stroke="#e8c828" opacity="0.05"/><path d="M1101.7 1249.5L1204.3 1249.5M1101.7 1249.5L1101.7 1345.3" stroke="#e8c828" opacity="0.064"/><path d="M1512.1 1249.5L1607.1 1249.5M1512.1 1249.5L1417.1 1249.5M1512.1 1249.5L1512.1 1349.5M1512.1 1249.5L1512.1 1149.5" stroke="#f04068" opacity="0.052"/><path d="M1512.1 1249.5L1614.7 1249.5M1512.1 1249.5L1512.1 1345.3" stroke="#f04068" opacity="0.066"/><path d="M1717.3 1249.5L1812.3 1249.5M1717.3 1249.5L1622.3 1249.5M1717.3 1249.5L1717.3 1349.5M1717.3 1249.5L1717.3 1149.5" stroke="#f050c8" opacity="0.052"/><path d="M1717.3 1249.5L1819.9 1249.5M1717.3 1249.5L1717.3 1345.3" stroke="#f050c8" opacity="0.066"/><path d="M1819.9 1249.5L1914.9 1249.5M1819.9 1249.5L1724.9 1249.5M1819.9 1249.5L1819.9 1349.5M1819.9 1249.5L1819.9 1149.5" stroke="#903888" opacity="0.031"/><path d="M1819.9 1249.5L1922.5 1249.5" stroke="#903888" opacity="0.04"/><path d="M1922.5 1249.5L2017.5 1249.5M1922.5 1249.5L1827.5 1249.5M1922.5 1249.5L1922.5 1349.5M1922.5 1249.5L1922.5 1149.5" stroke="#e850d0" opacity="0.05"/><path d="M1922.5 1249.5L2025.1 1249.5M1922.5 1249.5L1922.5 1345.3" stroke="#e850d0" opacity="0.064"/><path d="M2127.7 1249.5L2222.7 1249.5M2127.7 1249.5L2032.7 1249.5M2127.7 1249.5L2127.7 1349.5M2127.7 1249.5L2127.7 1149.5" stroke="#f05098" opacity="0.052"/><path d="M2127.7 1249.5L2230.3 1249.5M2127.7 1249.5L2127.7 1345.3" stroke="#f05098" opacity="0.066"/><path d="M2230.3 1249.5L2325.3 1249.5M2230.3 1249.5L2135.3 1249.5M2230.3 1249.5L2230.3 1349.5M2230.3 1249.5L2230.3 1149.5M1614.7 1345.3L1709.7 1345.3M1614.7 1345.3L1519.7 1345.3M1614.7 1345.3L1614.7 1445.3M1614.7 1345.3L1614.7 1245.3" stroke="#f04868" opacity="0.052"/><path d="M2230.3 1249.5L2332.9 1249.5M2230.3 1249.5L2230.3 1345.3M1614.7 1345.3L1717.3 1345.3" stroke="#f04868" opacity="0.066"/><path d="M2332.9 1249.5L2427.9 1249.5M2332.9 1249.5L2237.9 1249.5M2332.9 1249.5L2332.9 1349.5M2332.9 1249.5L2332.9 1149.5" stroke="#f05028" opacity="0.052"/><path d="M2332.9 1249.5L2435.5 1249.5M2332.9 1249.5L2332.9 1345.3" stroke="#f05028" opacity="0.066"/><path d="M2435.5 1249.5L2530.5 1249.5M2435.5 1249.5L2340.5 1249.5M2435.5 1249.5L2435.5 1349.5M2435.5 1249.5L2435.5 1149.5" stroke="#f06818" opacity="0.052"/><path d="M2435.5 1249.5L2538.1 1249.5M2435.5 1249.5L2435.5 1345.3" stroke="#f06818" opacity="0.066"/><path d="M2538.1 1249.5L2633.1 1249.5M2538.1 1249.5L2443.1 1249.5M2538.1 1249.5L2538.1 1349.5M2538.1 1249.5L2538.1 1149.5" stroke="#f0a028" opacity="0.052"/><path d="M2538.1 1249.5L2538.1 1345.3" stroke="#f0a028" opacity="0.066"/><path d="M2948.5 1249.5L3043.5 1249.5M2948.5 1249.5L2853.5 1249.5M2948.5 1249.5L2948.5 1349.5M2948.5 1249.5L2948.5 1149.5" stroke="#20b030" opacity="0.038"/><path d="M2948.5 1249.5L3051.1 1249.5" stroke="#20b030" opacity="0.048"/><path d="M3051.1 1249.5L3146.1 1249.5M3051.1 1249.5L2956.1 1249.5M3051.1 1249.5L3051.1 1349.5M3051.1 1249.5L3051.1 1149.5" stroke="#28b040" opacity="0.038"/><path d="M3051.1 1249.5L3153.7 1249.5" stroke="#28b040" opacity="0.048"/><path d="M3153.7 1249.5L3248.7 1249.5M3153.7 1249.5L3058.7 1249.5M3153.7 1249.5L3153.7 1349.5M3153.7 1249.5L3153.7 1149.5" stroke="#28c0a0" opacity="0.041"/><path d="M3153.7 1249.5L3256.3 1249.5M3153.7 1249.5L3153.7 1345.3" stroke="#28c0a0" opacity="0.053"/><path d="M3256.3 1249.5L3351.3 1249.5M3256.3 1249.5L3161.3 1249.5M3256.3 1249.5L3256.3 1349.5M3256.3 1249.5L3256.3 1149.5" stroke="#30a8f0" opacity="0.052"/><path d="M3256.3 1249.5L3256.3 1345.3" stroke="#30a8f0" opacity="0.066"/><path d="M1101.7 1345.3L1196.7 1345.3M1101.7 1345.3L1006.7 1345.3M1101.7 1345.3L1101.7 1445.3M1101.7 1345.3L1101.7 1245.3" stroke="#e8d030" opacity="0.05"/><path d="M1101.7 1345.3L1204.3 1345.3M1101.7 1345.3L1101.7 1454.7" stroke="#e8d030" opacity="0.064"/><path d="M1204.3 1345.3L1299.3 1345.3M1204.3 1345.3L1109.3 1345.3M1204.3 1345.3L1204.3 1445.3M1204.3 1345.3L1204.3 1245.3" stroke="#f0b828" opacity="0.052"/><path d="M1204.3 1345.3L1204.3 1454.7" stroke="#f0b828" opacity="0.066"/><path d="M1512.1 1345.3L1607.1 1345.3M1512.1 1345.3L1417.1 1345.3M1512.1 1345.3L1512.1 1445.3M1512.1 1345.3L1512.1 1245.3" stroke="#f04838" opacity="0.052"/><path d="M1512.1 1345.3L1614.7 1345.3" stroke="#f04838" opacity="0.066"/><path d="M1717.3 1345.3L1812.3 1345.3M1717.3 1345.3L1622.3 1345.3M1717.3 1345.3L1717.3 1445.3M1717.3 1345.3L1717.3 1245.3" stroke="#f05090" opacity="0.052"/><path d="M1922.5 1345.3L2017.5 1345.3M1922.5 1345.3L1827.5 1345.3M1922.5 1345.3L1922.5 1445.3M1922.5 1345.3L1922.5 1245.3" stroke="#e04890" opacity="0.048"/><path d="M1922.5 1345.3L2025.1 1345.3" stroke="#e04890" opacity="0.061"/><path d="M2025.1 1345.3L2120.1 1345.3M2025.1 1345.3L1930.1 1345.3M2025.1 1345.3L2025.1 1445.3M2025.1 1345.3L2025.1 1245.3" stroke="#f05088" opacity="0.052"/><path d="M2025.1 1345.3L2127.7 1345.3M2025.1 1345.3L2025.1 1454.7" stroke="#f05088" opacity="0.066"/><path d="M2127.7 1345.3L2222.7 1345.3M2127.7 1345.3L2032.7 1345.3M2127.7 1345.3L2127.7 1445.3M2127.7 1345.3L2127.7 1245.3" stroke="#f04860" opacity="0.052"/><path d="M2127.7 1345.3L2230.3 1345.3M2127.7 1345.3L2127.7 1454.7" stroke="#f04860" opacity="0.066"/><path d="M2230.3 1345.3L2325.3 1345.3M2230.3 1345.3L2135.3 1345.3M2230.3 1345.3L2230.3 1445.3M2230.3 1345.3L2230.3 1245.3" stroke="#f05030" opacity="0.052"/><path d="M2230.3 1345.3L2332.9 1345.3M2230.3 1345.3L2230.3 1454.7" stroke="#f05030" opacity="0.066"/><path d="M2332.9 1345.3L2427.9 1345.3M2332.9 1345.3L2237.9 1345.3M2332.9 1345.3L2332.9 1445.3M2332.9 1345.3L2332.9 1245.3M2127.7 1454.7L2222.7 1454.7M2127.7 1454.7L2032.7 1454.7M2127.7 1454.7L2127.7 1554.7M2127.7 1454.7L2127.7 1354.7" stroke="#f06020" opacity="0.052"/><path d="M2332.9 1345.3L2435.5 1345.3M2332.9 1345.3L2332.9 1454.7M2127.7 1454.7L2230.3 1454.7M2127.7 1454.7L2127.7 1550.5" stroke="#f06020" opacity="0.066"/><path d="M2435.5 1345.3L2530.5 1345.3M2435.5 1345.3L2340.5 1345.3M2435.5 1345.3L2435.5 1445.3M2435.5 1345.3L2435.5 1245.3" stroke="#f08820" opacity="0.052"/><path d="M2435.5 1345.3L2538.1 1345.3M2435.5 1345.3L2435.5 1454.7" stroke="#f08820" opacity="0.066"/><path d="M2538.1 1345.3L2633.1 1345.3M2538.1 1345.3L2443.1 1345.3M2538.1 1345.3L2538.1 1445.3M2538.1 1345.3L2538.1 1245.3M2127.7 1659.9L2222.7 1659.9M2127.7 1659.9L2032.7 1659.9M2127.7 1659.9L2127.7 1759.9M2127.7 1659.9L2127.7 1559.9" stroke="#f0b028" opacity="0.052"/><path d="M2538.1 1345.3L2640.7 1345.3M2538.1 1345.3L2538.1 1454.7M2127.7 1659.9L2230.3 1659.9" stroke="#f0b028" opacity="0.066"/><path d="M2640.7 1345.3L2735.7 1345.3M2640.7 1345.3L2545.7 1345.3M2640.7 1345.3L2640.7 1445.3M2640.7 1345.3L2640.7 1245.3M2538.1 1454.7L2633.1 1454.7M2538.1 1454.7L2443.1 1454.7M2538.1 1454.7L2538.1 1554.7M2538.1 1454.7L2538.1 1354.7" stroke="#f0d030" opacity="0.052"/><path d="M2640.7 1345.3L2640.7 1454.7M2538.1 1454.7L2640.7 1454.7" stroke="#f0d030" opacity="0.066"/><path d="M3153.7 1345.3L3248.7 1345.3M3153.7 1345.3L3058.7 1345.3M3153.7 1345.3L3153.7 1445.3M3153.7 1345.3L3153.7 1245.3" stroke="#28c0b0" opacity="0.041"/><path d="M3153.7 1345.3L3256.3 1345.3M3153.7 1345.3L3153.7 1454.7" stroke="#28c0b0" opacity="0.053"/><path d="M3256.3 1345.3L3351.3 1345.3M3256.3 1345.3L3161.3 1345.3M3256.3 1345.3L3256.3 1445.3M3256.3 1345.3L3256.3 1245.3" stroke="#28a8f0" opacity="0.052"/><path d="M3256.3 1345.3L3256.3 1454.7" stroke="#28a8f0" opacity="0.066"/><path d="M486.1 1454.7L581.1 1454.7M486.1 1454.7L391.1 1454.7M486.1 1454.7L486.1 1554.7M486.1 1454.7L486.1 1354.7" stroke="#28a0f0" opacity="0.052"/><path d="M486.1 1454.7L588.7 1454.7" stroke="#28a0f0" opacity="0.066"/><path d="M588.7 1454.7L683.7 1454.7M588.7 1454.7L493.7 1454.7M588.7 1454.7L588.7 1554.7M588.7 1454.7L588.7 1354.7" stroke="#28b8e0" opacity="0.048"/><path d="M588.7 1454.7L691.3 1454.7" stroke="#28b8e0" opacity="0.061"/><path d="M691.3 1454.7L786.3 1454.7M691.3 1454.7L596.3 1454.7M691.3 1454.7L691.3 1554.7M691.3 1454.7L691.3 1354.7" stroke="#28b868" opacity="0.04"/><path d="M896.5 1454.7L991.5 1454.7M896.5 1454.7L801.5 1454.7M896.5 1454.7L896.5 1554.7M896.5 1454.7L896.5 1354.7" stroke="#30b838" opacity="0.04"/><path d="M896.5 1454.7L999.1 1454.7M896.5 1454.7L896.5 1550.5" stroke="#30b838" opacity="0.051"/><path d="M999.1 1454.7L1094.1 1454.7M999.1 1454.7L904.1 1454.7M999.1 1454.7L999.1 1554.7M999.1 1454.7L999.1 1354.7" stroke="#88c830" opacity="0.043"/><path d="M999.1 1454.7L1101.7 1454.7M999.1 1454.7L999.1 1550.5" stroke="#88c830" opacity="0.055"/><path d="M1101.7 1454.7L1196.7 1454.7M1101.7 1454.7L1006.7 1454.7M1101.7 1454.7L1101.7 1554.7M1101.7 1454.7L1101.7 1354.7" stroke="#d8d030" opacity="0.047"/><path d="M1101.7 1454.7L1204.3 1454.7M1101.7 1454.7L1101.7 1550.5" stroke="#d8d030" opacity="0.059"/><path d="M1204.3 1454.7L1299.3 1454.7M1204.3 1454.7L1109.3 1454.7M1204.3 1454.7L1204.3 1554.7M1204.3 1454.7L1204.3 1354.7" stroke="#e8d028" opacity="0.05"/><path d="M1204.3 1454.7L1204.3 1550.5" stroke="#e8d028" opacity="0.064"/><path d="M2025.1 1454.7L2120.1 1454.7M2025.1 1454.7L1930.1 1454.7M2025.1 1454.7L2025.1 1554.7M2025.1 1454.7L2025.1 1354.7" stroke="#f06028" opacity="0.052"/><path d="M2025.1 1454.7L2127.7 1454.7M2025.1 1454.7L2025.1 1550.5" stroke="#f06028" opacity="0.066"/><path d="M2230.3 1454.7L2325.3 1454.7M2230.3 1454.7L2135.3 1454.7M2230.3 1454.7L2230.3 1554.7M2230.3 1454.7L2230.3 1354.7" stroke="#f07820" opacity="0.052"/><path d="M2230.3 1454.7L2332.9 1454.7M2230.3 1454.7L2230.3 1550.5" stroke="#f07820" opacity="0.066"/><path d="M2332.9 1454.7L2427.9 1454.7M2332.9 1454.7L2237.9 1454.7M2332.9 1454.7L2332.9 1554.7M2332.9 1454.7L2332.9 1354.7" stroke="#f09828" opacity="0.052"/><path d="M2332.9 1454.7L2435.5 1454.7M2332.9 1454.7L2332.9 1550.5" stroke="#f09828" opacity="0.066"/><path d="M2435.5 1454.7L2530.5 1454.7M2435.5 1454.7L2340.5 1454.7M2435.5 1454.7L2435.5 1554.7M2435.5 1454.7L2435.5 1354.7" stroke="#403010" opacity="0.014"/><path d="M2435.5 1454.7L2538.1 1454.7" stroke="#403010" opacity="0.018"/><path d="M2640.7 1454.7L2735.7 1454.7M2640.7 1454.7L2545.7 1454.7M2640.7 1454.7L2640.7 1554.7M2640.7 1454.7L2640.7 1354.7" stroke="#d8e030" opacity="0.048"/><path d="M2640.7 1454.7L2743.3 1454.7M2640.7 1454.7L2640.7 1550.5" stroke="#d8e030" opacity="0.061"/><path d="M2743.3 1454.7L2838.3 1454.7M2743.3 1454.7L2648.3 1454.7M2743.3 1454.7L2743.3 1554.7M2743.3 1454.7L2743.3 1354.7" stroke="#606018" opacity="0.021"/><path d="M2743.3 1454.7L2743.3 1550.5" stroke="#606018" opacity="0.026"/><path d="M3153.7 1454.7L3248.7 1454.7M3153.7 1454.7L3058.7 1454.7M3153.7 1454.7L3153.7 1554.7M3153.7 1454.7L3153.7 1354.7" stroke="#28b8d8" opacity="0.047"/><path d="M3153.7 1454.7L3256.3 1454.7" stroke="#28b8d8" opacity="0.059"/><path d="M3256.3 1454.7L3351.3 1454.7M3256.3 1454.7L3161.3 1454.7M3256.3 1454.7L3256.3 1554.7M3256.3 1454.7L3256.3 1354.7" stroke="#2898f0" opacity="0.052"/><path d="M3256.3 1454.7L3256.3 1550.5" stroke="#2898f0" opacity="0.066"/><path d="M896.5 1550.5L991.5 1550.5M896.5 1550.5L801.5 1550.5M896.5 1550.5L896.5 1650.5M896.5 1550.5L896.5 1450.5" stroke="#187828" opacity="0.026"/><path d="M896.5 1550.5L999.1 1550.5" stroke="#187828" opacity="0.033"/><path d="M999.1 1550.5L1094.1 1550.5M999.1 1550.5L904.1 1550.5M999.1 1550.5L999.1 1650.5M999.1 1550.5L999.1 1450.5" stroke="#38b830" opacity="0.04"/><path d="M999.1 1550.5L1101.7 1550.5M999.1 1550.5L999.1 1659.9" stroke="#38b830" opacity="0.051"/><path d="M1101.7 1550.5L1196.7 1550.5M1101.7 1550.5L1006.7 1550.5M1101.7 1550.5L1101.7 1650.5M1101.7 1550.5L1101.7 1450.5" stroke="#a8d030" opacity="0.045"/><path d="M1101.7 1550.5L1204.3 1550.5M1101.7 1550.5L1101.7 1659.9" stroke="#a8d030" opacity="0.057"/><path d="M1204.3 1550.5L1299.3 1550.5M1204.3 1550.5L1109.3 1550.5M1204.3 1550.5L1204.3 1650.5M1204.3 1550.5L1204.3 1450.5" stroke="#d8d830" opacity="0.047"/><path d="M1204.3 1550.5L1204.3 1659.9" stroke="#d8d830" opacity="0.059"/><path d="M2025.1 1550.5L2120.1 1550.5M2025.1 1550.5L1930.1 1550.5M2025.1 1550.5L2025.1 1650.5M2025.1 1550.5L2025.1 1450.5" stroke="#f07818" opacity="0.052"/><path d="M2025.1 1550.5L2127.7 1550.5M2025.1 1550.5L2025.1 1659.9" stroke="#f07818" opacity="0.066"/><path d="M2127.7 1550.5L2222.7 1550.5M2127.7 1550.5L2032.7 1550.5M2127.7 1550.5L2127.7 1650.5M2127.7 1550.5L2127.7 1450.5" stroke="#f09020" opacity="0.052"/><path d="M2127.7 1550.5L2230.3 1550.5M2127.7 1550.5L2127.7 1659.9" stroke="#f09020" opacity="0.066"/><path d="M2230.3 1550.5L2325.3 1550.5M2230.3 1550.5L2135.3 1550.5M2230.3 1550.5L2230.3 1650.5M2230.3 1550.5L2230.3 1450.5" stroke="#f0a828" opacity="0.052"/><path d="M2230.3 1550.5L2332.9 1550.5M2230.3 1550.5L2230.3 1659.9" stroke="#f0a828" opacity="0.066"/><path d="M2332.9 1550.5L2427.9 1550.5M2332.9 1550.5L2237.9 1550.5M2332.9 1550.5L2332.9 1650.5M2332.9 1550.5L2332.9 1450.5" stroke="#f0c030" opacity="0.052"/><path d="M2332.9 1550.5L2332.9 1659.9" stroke="#f0c030" opacity="0.066"/><path d="M2640.7 1550.5L2735.7 1550.5M2640.7 1550.5L2545.7 1550.5M2640.7 1550.5L2640.7 1650.5M2640.7 1550.5L2640.7 1450.5" stroke="#78a820" opacity="0.036"/><path d="M2640.7 1550.5L2743.3 1550.5" stroke="#78a820" opacity="0.046"/><path d="M2743.3 1550.5L2838.3 1550.5M2743.3 1550.5L2648.3 1550.5M2743.3 1550.5L2743.3 1650.5M2743.3 1550.5L2743.3 1450.5" stroke="#40b828" opacity="0.04"/><path d="M3256.3 1550.5L3351.3 1550.5M3256.3 1550.5L3161.3 1550.5M3256.3 1550.5L3256.3 1650.5M3256.3 1550.5L3256.3 1450.5" stroke="#2088f0" opacity="0.052"/><path d="M691.3 1659.9L786.3 1659.9M691.3 1659.9L596.3 1659.9M691.3 1659.9L691.3 1759.9M691.3 1659.9L691.3 1559.9" stroke="#2898d8" opacity="0.047"/><path d="M691.3 1659.9L793.9 1659.9" stroke="#2898d8" opacity="0.059"/><path d="M793.9 1659.9L888.9 1659.9M793.9 1659.9L698.9 1659.9M793.9 1659.9L793.9 1759.9M793.9 1659.9L793.9 1559.9" stroke="#20b878" opacity="0.04"/><path d="M1101.7 1659.9L1196.7 1659.9M1101.7 1659.9L1006.7 1659.9M1101.7 1659.9L1101.7 1759.9M1101.7 1659.9L1101.7 1559.9" stroke="#58c830" opacity="0.043"/><path d="M1101.7 1659.9L1204.3 1659.9" stroke="#58c830" opacity="0.055"/><path d="M1204.3 1659.9L1299.3 1659.9M1204.3 1659.9L1109.3 1659.9M1204.3 1659.9L1204.3 1759.9M1204.3 1659.9L1204.3 1559.9" stroke="#b0d030" opacity="0.045"/><path d="M1204.3 1659.9L1306.9 1659.9" stroke="#b0d030" opacity="0.057"/><path d="M1306.9 1659.9L1401.9 1659.9M1306.9 1659.9L1211.9 1659.9M1306.9 1659.9L1306.9 1759.9M1306.9 1659.9L1306.9 1559.9" stroke="#d0d828" opacity="0.047"/><path d="M1306.9 1659.9L1409.5 1659.9" stroke="#d0d828" opacity="0.059"/><path d="M1512.1 1659.9L1607.1 1659.9M1512.1 1659.9L1417.1 1659.9M1512.1 1659.9L1512.1 1759.9M1512.1 1659.9L1512.1 1559.9M2230.3 1659.9L2325.3 1659.9M2230.3 1659.9L2135.3 1659.9M2230.3 1659.9L2230.3 1759.9M2230.3 1659.9L2230.3 1559.9" stroke="#f0d028" opacity="0.052"/><path d="M2230.3 1659.9L2332.9 1659.9" stroke="#f0d028" opacity="0.066"/><path d="M2332.9 1659.9L2427.9 1659.9M2332.9 1659.9L2237.9 1659.9M2332.9 1659.9L2332.9 1759.9M2332.9 1659.9L2332.9 1559.9" stroke="#f0e030" opacity="0.052"/><path d="M2332.9 1659.9L2435.5 1659.9" stroke="#f0e030" opacity="0.066"/><path d="M2435.5 1659.9L2530.5 1659.9M2435.5 1659.9L2340.5 1659.9M2435.5 1659.9L2435.5 1759.9M2435.5 1659.9L2435.5 1559.9" stroke="#787818" opacity="0.026"/></g><g filter="url(#dbl)"><rect x="481.8" y="109.8" width="8.6" height="8.6" rx="1.6" fill="#1e90ff"/><rect x="892.2" y="109.8" width="8.6" height="8.6" rx="1.6" fill="#2fb84a"/><rect x="994.8" y="109.8" width="8.6" height="8.6" rx="1.6" fill="#22b53a"/><rect x="1713.0" y="109.8" width="8.6" height="8.6" rx="1.6" fill="#f0a020"/><rect x="1815.6" y="109.8" width="8.6" height="8.6" rx="1.6" fill="#f0a020"/><rect x="1918.2" y="109.8" width="8.6" height="8.6" rx="1.6" fill="#f0a428"/><rect x="2020.8" y="109.8" width="8.6" height="8.6" rx="1.6" fill="#f0a428"/><rect x="2328.6" y="109.8" width="8.6" height="8.6" rx="1.6" fill="#d8d820"/><rect x="2431.2" y="109.8" width="8.6" height="8.6" rx="1.6" fill="#d8d820"/><rect x="2533.8" y="109.8" width="8.6" height="8.6" rx="1.6" fill="#a0d830"/><rect x="3252.0" y="109.8" width="8.6" height="8.6" rx="1.6" fill="#2080f0"/><rect x="481.8" y="219.2" width="8.6" height="8.6" rx="1.6" fill="#2a9dff"/><rect x="1610.4" y="219.2" width="8.6" height="8.6" rx="1.6" fill="#f58a1a"/><rect x="1713.0" y="219.2" width="8.6" height="8.6" rx="1.6" fill="#f5781a"/><rect x="1918.2" y="219.2" width="8.6" height="8.6" rx="1.6" fill="#f56a1a"/><rect x="2020.8" y="219.2" width="8.6" height="8.6" rx="1.6" fill="#f5781a"/><rect x="2431.2" y="219.2" width="8.6" height="8.6" rx="1.6" fill="#f0d020"/><rect x="2533.8" y="219.2" width="8.6" height="8.6" rx="1.6" fill="#f0e040"/><rect x="2636.4" y="219.2" width="8.6" height="8.6" rx="1.6" fill="#b0d838"/><rect x="2739.0" y="219.2" width="8.6" height="8.6" rx="1.6" fill="#50c840"/><rect x="2841.6" y="219.2" width="8.6" height="8.6" rx="1.6" fill="#28c038"/><rect x="3252.0" y="219.2" width="8.6" height="8.6" rx="1.6" fill="#2090f0"/><rect x="789.6" y="315.0" width="8.6" height="8.6" rx="1.6" fill="#1f6b2a"/><rect x="1302.6" y="315.0" width="8.6" height="8.6" rx="1.6" fill="#f5a623"/><rect x="1405.2" y="315.0" width="8.6" height="8.6" rx="1.6" fill="#f0a020"/><rect x="1507.8" y="315.0" width="8.6" height="8.6" rx="1.6" fill="#b05010"/><rect x="1610.4" y="315.0" width="8.6" height="8.6" rx="1.6" fill="#f5601a"/><rect x="1713.0" y="315.0" width="8.6" height="8.6" rx="1.6" fill="#f5502a"/><rect x="1918.2" y="315.0" width="8.6" height="8.6" rx="1.6" fill="#f04040"/><rect x="2636.4" y="315.0" width="8.6" height="8.6" rx="1.6" fill="#d8d828"/><rect x="2739.0" y="315.0" width="8.6" height="8.6" rx="1.6" fill="#90d838"/><rect x="2841.6" y="315.0" width="8.6" height="8.6" rx="1.6" fill="#30c840"/><rect x="2944.2" y="315.0" width="8.6" height="8.6" rx="1.6" fill="#20b840"/><rect x="3046.8" y="315.0" width="8.6" height="8.6" rx="1.6" fill="#20b870"/><rect x="3252.0" y="315.0" width="8.6" height="8.6" rx="1.6" fill="#102050"/><rect x="1200.0" y="424.4" width="8.6" height="8.6" rx="1.6" fill="#e0b020"/><rect x="1302.6" y="424.4" width="8.6" height="8.6" rx="1.6" fill="#f57c1a"/><rect x="2226.0" y="424.4" width="8.6" height="8.6" rx="1.6" fill="#401030"/><rect x="2328.6" y="424.4" width="8.6" height="8.6" rx="1.6" fill="#f06a1a"/><rect x="2431.2" y="424.4" width="8.6" height="8.6" rx="1.6" fill="#f07a1a"/><rect x="2636.4" y="424.4" width="8.6" height="8.6" rx="1.6" fill="#807018"/><rect x="2739.0" y="424.4" width="8.6" height="8.6" rx="1.6" fill="#c0d838"/><rect x="2841.6" y="424.4" width="8.6" height="8.6" rx="1.6" fill="#60c838"/><rect x="2944.2" y="424.4" width="8.6" height="8.6" rx="1.6" fill="#20b840"/><rect x="3046.8" y="424.4" width="8.6" height="8.6" rx="1.6" fill="#20b850"/><rect x="481.8" y="520.2" width="8.6" height="8.6" rx="1.6" fill="#28b4e0"/><rect x="892.2" y="520.2" width="8.6" height="8.6" rx="1.6" fill="#8ccf3a"/><rect x="994.8" y="520.2" width="8.6" height="8.6" rx="1.6" fill="#3a3a20"/><rect x="2226.0" y="520.2" width="8.6" height="8.6" rx="1.6" fill="#f04a80"/><rect x="2328.6" y="520.2" width="8.6" height="8.6" rx="1.6" fill="#f0602a"/><rect x="2431.2" y="520.2" width="8.6" height="8.6" rx="1.6" fill="#f0501a"/><rect x="2739.0" y="520.2" width="8.6" height="8.6" rx="1.6" fill="#e8d828"/><rect x="2841.6" y="520.2" width="8.6" height="8.6" rx="1.6" fill="#78d038"/><rect x="2944.2" y="520.2" width="8.6" height="8.6" rx="1.6" fill="#28b838"/><rect x="3046.8" y="520.2" width="8.6" height="8.6" rx="1.6" fill="#20b848"/><rect x="481.8" y="629.6" width="8.6" height="8.6" rx="1.6" fill="#25b8dc"/><rect x="789.6" y="629.6" width="8.6" height="8.6" rx="1.6" fill="#4fc83a"/><rect x="892.2" y="629.6" width="8.6" height="8.6" rx="1.6" fill="#a4cf3a"/><rect x="994.8" y="629.6" width="8.6" height="8.6" rx="1.6" fill="#d4c42a"/><rect x="1405.2" y="629.6" width="8.6" height="8.6" rx="1.6" fill="#f04070"/><rect x="2226.0" y="629.6" width="8.6" height="8.6" rx="1.6" fill="#f048b0"/><rect x="2328.6" y="629.6" width="8.6" height="8.6" rx="1.6" fill="#f04858"/><rect x="2431.2" y="629.6" width="8.6" height="8.6" rx="1.6" fill="#f03a10"/><rect x="2739.0" y="629.6" width="8.6" height="8.6" rx="1.6" fill="#f0d820"/><rect x="2841.6" y="629.6" width="8.6" height="8.6" rx="1.6" fill="#90d030"/><rect x="2944.2" y="629.6" width="8.6" height="8.6" rx="1.6" fill="#186818"/><rect x="3252.0" y="629.6" width="8.6" height="8.6" rx="1.6" fill="#20b0d0"/><rect x="481.8" y="725.4" width="8.6" height="8.6" rx="1.6" fill="#25b8d8"/><rect x="584.4" y="725.4" width="8.6" height="8.6" rx="1.6" fill="#22b070"/><rect x="789.6" y="725.4" width="8.6" height="8.6" rx="1.6" fill="#4cc030"/><rect x="892.2" y="725.4" width="8.6" height="8.6" rx="1.6" fill="#c0d83a"/><rect x="1405.2" y="725.4" width="8.6" height="8.6" rx="1.6" fill="#f04088"/><rect x="2328.6" y="725.4" width="8.6" height="8.6" rx="1.6" fill="#f04880"/><rect x="2739.0" y="725.4" width="8.6" height="8.6" rx="1.6" fill="#505010"/><rect x="3252.0" y="725.4" width="8.6" height="8.6" rx="1.6" fill="#104838"/><rect x="481.8" y="834.8" width="8.6" height="8.6" rx="1.6" fill="#22b4d0"/><rect x="1302.6" y="834.8" width="8.6" height="8.6" rx="1.6" fill="#f03a3a"/><rect x="1405.2" y="834.8" width="8.6" height="8.6" rx="1.6" fill="#f040a0"/><rect x="2226.0" y="834.8" width="8.6" height="8.6" rx="1.6" fill="#b040c0"/><rect x="2328.6" y="834.8" width="8.6" height="8.6" rx="1.6" fill="#f048a0"/><rect x="2431.2" y="834.8" width="8.6" height="8.6" rx="1.6" fill="#401018"/><rect x="2636.4" y="834.8" width="8.6" height="8.6" rx="1.6" fill="#906018"/><rect x="2739.0" y="834.8" width="8.6" height="8.6" rx="1.6" fill="#403818"/><rect x="1200.0" y="930.6" width="8.6" height="8.6" rx="1.6" fill="#f0801a"/><rect x="1302.6" y="930.6" width="8.6" height="8.6" rx="1.6" fill="#f03a3a"/><rect x="1405.2" y="930.6" width="8.6" height="8.6" rx="1.6" fill="#f04890"/><rect x="1507.8" y="930.6" width="8.6" height="8.6" rx="1.6" fill="#f050c0"/><rect x="1815.6" y="930.6" width="8.6" height="8.6" rx="1.6" fill="#1838e0"/><rect x="2226.0" y="930.6" width="8.6" height="8.6" rx="1.6" fill="#e848d0"/><rect x="2328.6" y="930.6" width="8.6" height="8.6" rx="1.6" fill="#f050a0"/><rect x="2431.2" y="930.6" width="8.6" height="8.6" rx="1.6" fill="#b03058"/><rect x="2739.0" y="930.6" width="8.6" height="8.6" rx="1.6" fill="#f0d828"/><rect x="3046.8" y="930.6" width="8.6" height="8.6" rx="1.6" fill="#207820"/><rect x="1507.8" y="1040.0" width="8.6" height="8.6" rx="1.6" fill="#f050c0"/><rect x="1713.0" y="1040.0" width="8.6" height="8.6" rx="1.6" fill="#a048e0"/><rect x="1815.6" y="1040.0" width="8.6" height="8.6" rx="1.6" fill="#5040e0"/><rect x="2328.6" y="1040.0" width="8.6" height="8.6" rx="1.6" fill="#903048"/><rect x="2431.2" y="1040.0" width="8.6" height="8.6" rx="1.6" fill="#e04058"/><rect x="3046.8" y="1040.0" width="8.6" height="8.6" rx="1.6" fill="#28b830"/><rect x="1097.4" y="1135.8" width="8.6" height="8.6" rx="1.6" fill="#e8b828"/><rect x="1200.0" y="1135.8" width="8.6" height="8.6" rx="1.6" fill="#f08a20"/><rect x="1507.8" y="1135.8" width="8.6" height="8.6" rx="1.6" fill="#f050b0"/><rect x="1610.4" y="1135.8" width="8.6" height="8.6" rx="1.6" fill="#f050d0"/><rect x="1713.0" y="1135.8" width="8.6" height="8.6" rx="1.6" fill="#e850d8"/><rect x="1815.6" y="1135.8" width="8.6" height="8.6" rx="1.6" fill="#d048e0"/><rect x="2328.6" y="1135.8" width="8.6" height="8.6" rx="1.6" fill="#b03848"/><rect x="2431.2" y="1135.8" width="8.6" height="8.6" rx="1.6" fill="#f05020"/><rect x="3046.8" y="1135.8" width="8.6" height="8.6" rx="1.6" fill="#28a838"/><rect x="1097.4" y="1245.2" width="8.6" height="8.6" rx="1.6" fill="#e8c828"/><rect x="1200.0" y="1245.2" width="8.6" height="8.6" rx="1.6" fill="#f0a020"/><rect x="1507.8" y="1245.2" width="8.6" height="8.6" rx="1.6" fill="#f04068"/><rect x="1610.4" y="1245.2" width="8.6" height="8.6" rx="1.6" fill="#f048a0"/><rect x="1713.0" y="1245.2" width="8.6" height="8.6" rx="1.6" fill="#f050c8"/><rect x="1815.6" y="1245.2" width="8.6" height="8.6" rx="1.6" fill="#903888"/><rect x="1918.2" y="1245.2" width="8.6" height="8.6" rx="1.6" fill="#e850d0"/><rect x="2020.8" y="1245.2" width="8.6" height="8.6" rx="1.6" fill="#f050c0"/><rect x="2123.4" y="1245.2" width="8.6" height="8.6" rx="1.6" fill="#f05098"/><rect x="2226.0" y="1245.2" width="8.6" height="8.6" rx="1.6" fill="#f04868"/><rect x="2328.6" y="1245.2" width="8.6" height="8.6" rx="1.6" fill="#f05028"/><rect x="2431.2" y="1245.2" width="8.6" height="8.6" rx="1.6" fill="#f06818"/><rect x="2533.8" y="1245.2" width="8.6" height="8.6" rx="1.6" fill="#f0a028"/><rect x="2944.2" y="1245.2" width="8.6" height="8.6" rx="1.6" fill="#20b030"/><rect x="3046.8" y="1245.2" width="8.6" height="8.6" rx="1.6" fill="#28b040"/><rect x="3149.4" y="1245.2" width="8.6" height="8.6" rx="1.6" fill="#28c0a0"/><rect x="3252.0" y="1245.2" width="8.6" height="8.6" rx="1.6" fill="#30a8f0"/><rect x="1097.4" y="1341.0" width="8.6" height="8.6" rx="1.6" fill="#e8d030"/><rect x="1200.0" y="1341.0" width="8.6" height="8.6" rx="1.6" fill="#f0b828"/><rect x="1507.8" y="1341.0" width="8.6" height="8.6" rx="1.6" fill="#f04838"/><rect x="1610.4" y="1341.0" width="8.6" height="8.6" rx="1.6" fill="#f04868"/><rect x="1713.0" y="1341.0" width="8.6" height="8.6" rx="1.6" fill="#f05090"/><rect x="1918.2" y="1341.0" width="8.6" height="8.6" rx="1.6" fill="#e04890"/><rect x="2020.8" y="1341.0" width="8.6" height="8.6" rx="1.6" fill="#f05088"/><rect x="2123.4" y="1341.0" width="8.6" height="8.6" rx="1.6" fill="#f04860"/><rect x="2226.0" y="1341.0" width="8.6" height="8.6" rx="1.6" fill="#f05030"/><rect x="2328.6" y="1341.0" width="8.6" height="8.6" rx="1.6" fill="#f06020"/><rect x="2431.2" y="1341.0" width="8.6" height="8.6" rx="1.6" fill="#f08820"/><rect x="2533.8" y="1341.0" width="8.6" height="8.6" rx="1.6" fill="#f0b028"/><rect x="2636.4" y="1341.0" width="8.6" height="8.6" rx="1.6" fill="#f0d030"/><rect x="3149.4" y="1341.0" width="8.6" height="8.6" rx="1.6" fill="#28c0b0"/><rect x="3252.0" y="1341.0" width="8.6" height="8.6" rx="1.6" fill="#28a8f0"/><rect x="481.8" y="1450.4" width="8.6" height="8.6" rx="1.6" fill="#28a0f0"/><rect x="584.4" y="1450.4" width="8.6" height="8.6" rx="1.6" fill="#28b8e0"/><rect x="687.0" y="1450.4" width="8.6" height="8.6" rx="1.6" fill="#28b868"/><rect x="892.2" y="1450.4" width="8.6" height="8.6" rx="1.6" fill="#30b838"/><rect x="994.8" y="1450.4" width="8.6" height="8.6" rx="1.6" fill="#88c830"/><rect x="1097.4" y="1450.4" width="8.6" height="8.6" rx="1.6" fill="#d8d030"/><rect x="1200.0" y="1450.4" width="8.6" height="8.6" rx="1.6" fill="#e8d028"/><rect x="2020.8" y="1450.4" width="8.6" height="8.6" rx="1.6" fill="#f06028"/><rect x="2123.4" y="1450.4" width="8.6" height="8.6" rx="1.6" fill="#f06020"/><rect x="2226.0" y="1450.4" width="8.6" height="8.6" rx="1.6" fill="#f07820"/><rect x="2328.6" y="1450.4" width="8.6" height="8.6" rx="1.6" fill="#f09828"/><rect x="2431.2" y="1450.4" width="8.6" height="8.6" rx="1.6" fill="#403010"/><rect x="2533.8" y="1450.4" width="8.6" height="8.6" rx="1.6" fill="#f0d030"/><rect x="2636.4" y="1450.4" width="8.6" height="8.6" rx="1.6" fill="#d8e030"/><rect x="2739.0" y="1450.4" width="8.6" height="8.6" rx="1.6" fill="#606018"/><rect x="3149.4" y="1450.4" width="8.6" height="8.6" rx="1.6" fill="#28b8d8"/><rect x="3252.0" y="1450.4" width="8.6" height="8.6" rx="1.6" fill="#2898f0"/><rect x="892.2" y="1546.2" width="8.6" height="8.6" rx="1.6" fill="#187828"/><rect x="994.8" y="1546.2" width="8.6" height="8.6" rx="1.6" fill="#38b830"/><rect x="1097.4" y="1546.2" width="8.6" height="8.6" rx="1.6" fill="#a8d030"/><rect x="1200.0" y="1546.2" width="8.6" height="8.6" rx="1.6" fill="#d8d830"/><rect x="2020.8" y="1546.2" width="8.6" height="8.6" rx="1.6" fill="#f07818"/><rect x="2123.4" y="1546.2" width="8.6" height="8.6" rx="1.6" fill="#f09020"/><rect x="2226.0" y="1546.2" width="8.6" height="8.6" rx="1.6" fill="#f0a828"/><rect x="2328.6" y="1546.2" width="8.6" height="8.6" rx="1.6" fill="#f0c030"/><rect x="2636.4" y="1546.2" width="8.6" height="8.6" rx="1.6" fill="#78a820"/><rect x="2739.0" y="1546.2" width="8.6" height="8.6" rx="1.6" fill="#40b828"/><rect x="3252.0" y="1546.2" width="8.6" height="8.6" rx="1.6" fill="#2088f0"/><rect x="687.0" y="1655.6" width="8.6" height="8.6" rx="1.6" fill="#2898d8"/><rect x="789.6" y="1655.6" width="8.6" height="8.6" rx="1.6" fill="#20b878"/><rect x="994.8" y="1655.6" width="8.6" height="8.6" rx="1.6" fill="#28b838"/><rect x="1097.4" y="1655.6" width="8.6" height="8.6" rx="1.6" fill="#58c830"/><rect x="1200.0" y="1655.6" width="8.6" height="8.6" rx="1.6" fill="#b0d030"/><rect x="1302.6" y="1655.6" width="8.6" height="8.6" rx="1.6" fill="#d0d828"/><rect x="1405.2" y="1655.6" width="8.6" height="8.6" rx="1.6" fill="#e8d828"/><rect x="1507.8" y="1655.6" width="8.6" height="8.6" rx="1.6" fill="#f0d028"/><rect x="2020.8" y="1655.6" width="8.6" height="8.6" rx="1.6" fill="#f0a020"/><rect x="2123.4" y="1655.6" width="8.6" height="8.6" rx="1.6" fill="#f0b028"/><rect x="2226.0" y="1655.6" width="8.6" height="8.6" rx="1.6" fill="#f0d028"/><rect x="2328.6" y="1655.6" width="8.6" height="8.6" rx="1.6" fill="#f0e030"/><rect x="2431.2" y="1655.6" width="8.6" height="8.6" rx="1.6" fill="#787818"/></g></svg>
<svg class="a" style="left:440px;top:1040px" width="620" height="400" viewBox="0 0 620 400"><defs><filter id="bl6" x="-20%" y="-20%" width="140%" height="140%"><feGaussianBlur stdDeviation="5"/></filter><filter id="b40" x="-100%" y="-100%" width="300%" height="300%"><feGaussianBlur stdDeviation="85"/></filter><filter id="b12" x="-100%" y="-100%" width="300%" height="300%"><feGaussianBlur stdDeviation="18"/></filter><filter id="b6" x="-100%" y="-100%" width="300%" height="300%"><feGaussianBlur stdDeviation="7"/></filter><filter id="bph" x="0" y="0" width="100%" height="100%"><feGaussianBlur stdDeviation="2.2"/></filter><filter id="bl3" x="-20%" y="-20%" width="140%" height="140%"><feGaussianBlur stdDeviation="2.200"/></filter><filter id="bl1" x="-20%" y="-20%" width="140%" height="140%"><feGaussianBlur stdDeviation="1"/></filter><linearGradient id="fr" x1="0" y1="0" x2="0" y2="1"><stop offset="0" stop-color="#2a2a2a"/><stop offset="1" stop-color="#0d0d0d"/></linearGradient><radialGradient id="skin" cx=".400" cy=".380" r=".720"><stop offset="0" stop-color="#d0a292"/><stop offset=".550" stop-color="#c08472"/><stop offset="1" stop-color="#8a5244"/></radialGradient><linearGradient id="shirt" x1="0" y1="0" x2="1" y2=".600"><stop offset="0" stop-color="#c4ae42"/><stop offset=".350" stop-color="#cdb948"/><stop offset=".750" stop-color="#c4ad42"/><stop offset="1" stop-color="#a08c34"/></linearGradient><clipPath id="hd"><path d="M1130 128C980 128 880 240 875 420C872 560 900 700 960 790C1010 850 1070 880 1135 880C1200 880 1262 850 1305 790C1362 700 1392 560 1388 420C1384 240 1280 128 1130 128Z"/></clipPath><clipPath id="ph"><rect x="60.5" y="35.2" width="497.900" height="285.400"/></clipPath></defs><polygon points="45.6,18.8 29.9,19.4 28.8,24.9 30.4,41.5 32.1,55.3 29.9,74.6 29.0,91.2 27.6,110.6 23.8,124.4 18.8,135.5 14.4,143.8 18.2,147.1 22.1,150.7 20.7,154.8 24.3,159.0 24.9,163.1 22.1,171.4 26.3,179.7 24.9,190.8 29.0,197.7 19.4,203.2 27.6,207.4 21.6,214.3 16.6,221.2 29.0,225.3 26.3,235.0 29.0,240.5 20.7,250.2 27.6,257.1 23.5,265.4 29.0,273.7 30.4,279.2 35.9,282.0 34.6,287.5 40.1,293.1 41.5,300.0 45.6,301.4" fill="#fba90a"/><polygon points="571.1,18.8 586.8,19.4 587.9,24.9 586.3,41.5 584.6,55.3 586.8,74.6 587.7,91.2 589.1,110.6 592.9,124.4 597.9,135.5 602.3,143.8 598.5,147.1 594.6,150.7 596.0,154.8 592.4,159.0 591.8,163.1 594.6,171.4 590.4,179.7 591.8,190.8 587.7,197.7 597.3,203.2 589.1,207.4 595.1,214.3 600.1,221.2 587.7,225.3 590.4,235.0 587.7,240.5 596.0,250.2 589.1,257.1 593.2,265.4 587.7,273.7 586.3,279.2 580.8,282.0 582.1,287.5 576.6,293.1 575.2,300.0 571.1,301.4" fill="#fba90a"/><path d="M46 19H571V338.5H484L449.5 373.5H332L326 379H293L287 373.5H169L138 338.5H46Z" fill="url(#fr)" stroke="#e3940c" stroke-width="1.500"/><g clip-path="url(#ph)"><g transform="translate(55 30) scale(0.21004)" filter="url(#bph)"><rect x="0" y="0" width="2430" height="1410" fill="#1a0e0b"/><rect x="20" y="20" width="200" height="640" fill="#2e1a14" filter="url(#b40)"/><rect x="700" y="20" width="1500" height="330" fill="#26140f" filter="url(#b40)"/><rect x="2050" y="20" width="380" height="700" fill="#21110d" filter="url(#b40)"/><path d="M225 25H690L700 210L680 370H225Z" fill="#0b0605" filter="url(#b12)"/><rect x="1380" y="390" width="760" height="330" rx="30" fill="#130a08" filter="url(#b12)"/><rect x="1330" y="700" width="560" height="700" fill="#120907" filter="url(#b40)"/><path d="M1822 800C1900 760 2200 735 2400 745V930C2300 960 2150 965 2050 955C1950 930 1850 880 1822 800Z" fill="#3f2e29" filter="url(#b12)"/><ellipse cx="2200" cy="800" rx="120" ry="22" fill="#4e3b34" filter="url(#b12)"/><ellipse cx="2240" cy="862" rx="90" ry="24" fill="#140b0a" filter="url(#b6)"/><path d="M2080 960L2120 960L2110 1300L2085 1300Z" fill="#0d0706" filter="url(#b6)"/><path d="M1985 1030C2090 1020 2170 1140 2200 1330H1895C1900 1200 1930 1080 1985 1030Z" fill="#2f211d" filter="url(#b12)"/><ellipse cx="1930" cy="1315" rx="110" ry="38" fill="#5c2233" filter="url(#b12)"/><path d="M330 420C345 270 470 228 610 230C760 232 880 262 878 420L900 760L860 1400H30V1180C60 1020 130 900 200 800C270 690 320 560 330 420Z" fill="#0a0707" filter="url(#b6)"/><path d="M345 420C360 300 470 250 610 250C740 252 850 280 860 400" fill="none" stroke="#2a2222" stroke-width="12" filter="url(#b6)"/><path d="M70 1180C95 1050 150 960 205 900C175 1000 130 1120 120 1260Z" fill="#1e1818" filter="url(#b6)"/><path d="M300 540C420 600 700 620 880 560" fill="none" stroke="#140f0f" stroke-width="14" filter="url(#b6)"/><text x="456" y="476" font-family="Liberation Sans, sans-serif" font-size="54" textLength="340" lengthAdjust="spacingAndGlyphs"><tspan fill="#b9473d">MAX</tspan><tspan fill="#5d5252">NOMIC</tspan></text><path d="M305 1400C330 1230 380 1060 500 960C620 880 780 830 870 750L1000 900L1240 1120L1320 800C1430 850 1560 900 1610 990C1650 1090 1640 1250 1620 1400Z" fill="url(#shirt)"/><path d="M900 820C930 960 980 1040 1000 1120C990 1200 900 1280 870 1400" fill="none" stroke="#a28f38" stroke-width="7" opacity=".8"/><path d="M1330 830C1350 960 1340 1060 1250 1135" fill="none" stroke="#a28f38" stroke-width="7" opacity=".7"/><ellipse cx="700" cy="1100" rx="230" ry="160" fill="#d4c050" opacity=".35" filter="url(#b40)"/><path d="M300 1400L335 1272C450 1290 600 1330 690 1372L680 1400Z" fill="#4a4a48"/><path d="M1600 1400L1640 1085C1700 1150 1740 1290 1760 1400Z" fill="#3e3c3b"/><path d="M1690 1230L1740 1380" stroke="#b9a9a4" stroke-width="8" opacity=".7"/><path d="M1672 1250L1718 1395" stroke="#b9a9a4" stroke-width="6" opacity=".5"/><path d="M1525 1345L1570 1345L1580 1388L1520 1388Z" fill="#2a2a20"/><path d="M880 760C900 880 960 960 1010 1010C1090 1060 1180 1100 1240 1125C1290 1080 1320 960 1318 800L1260 720L960 720Z" fill="#a86a56"/><path d="M900 790C1000 870 1200 880 1310 800L1290 930C1180 960 1040 950 940 900Z" fill="#8e5644" opacity=".7" filter="url(#b12)"/><ellipse cx="1215" cy="1075" rx="50" ry="40" fill="#9a6250" opacity=".6" filter="url(#b12)"/><ellipse cx="872" cy="545" rx="38" ry="92" fill="#b4705e"/><ellipse cx="872" cy="550" rx="20" ry="60" fill="#9a5646" filter="url(#b6)"/><ellipse cx="1380" cy="545" rx="36" ry="90" fill="#9a5848"/><ellipse cx="1380" cy="550" rx="18" ry="58" fill="#7c4234" filter="url(#b6)"/><path d="M1130 128C980 128 880 240 875 420C872 560 900 700 960 790C1010 850 1070 880 1135 880C1200 880 1262 850 1305 790C1362 700 1392 560 1388 420C1384 240 1280 128 1130 128Z" fill="url(#skin)"/><g clip-path="url(#hd)"><path d="M1300 300C1400 420 1390 640 1305 790C1330 640 1340 460 1300 300Z" fill="#7a4132" opacity=".7" filter="url(#b12)"/><ellipse cx="985" cy="600" rx="70" ry="110" fill="#d98f78" opacity=".7" filter="url(#b40)"/><ellipse cx="1275" cy="610" rx="60" ry="100" fill="#b8705c" opacity=".6" filter="url(#b40)"/><path d="M878 440C868 250 980 122 1130 122C1282 122 1392 250 1386 440C1350 330 1290 235 1130 228C970 235 915 330 878 440Z" fill="#4a2e27" opacity=".92" filter="url(#b12)"/><ellipse cx="1110" cy="330" rx="150" ry="55" fill="#d6aa98" opacity=".5" filter="url(#b12)"/><ellipse cx="1032" cy="458" rx="78" ry="30" fill="#8a5444" opacity=".8" filter="url(#b12)"/><ellipse cx="1235" cy="456" rx="74" ry="30" fill="#7c4a3c" opacity=".8" filter="url(#b12)"/><path d="M975 432C1010 418 1060 420 1095 436" fill="none" stroke="#6a4034" stroke-width="9" opacity=".7" filter="url(#b6)"/><path d="M1178 436C1215 420 1262 420 1296 434" fill="none" stroke="#6a4034" stroke-width="9" opacity=".7" filter="url(#b6)"/><ellipse cx="1036" cy="464" rx="24" ry="8" fill="#9a8078"/><ellipse cx="1232" cy="462" rx="23" ry="8" fill="#8c746c"/><circle cx="1038" cy="463" r="8.500" fill="#465254"/><circle cx="1230" cy="461" r="8.500" fill="#404c4e"/><circle cx="1038" cy="463" r="5" fill="#1c1412"/><circle cx="1230" cy="461" r="5" fill="#1c1412"/><path d="M1002 462C1020 448 1052 448 1072 464" fill="none" stroke="#5a352b" stroke-width="5"/><path d="M1198 462C1215 447 1248 447 1266 462" fill="none" stroke="#5a352b" stroke-width="5"/><path d="M1120 470C1112 520 1100 560 1092 590" fill="none" stroke="#e0a68f" stroke-width="22" opacity=".55" filter="url(#b12)"/><ellipse cx="1130" cy="598" rx="62" ry="26" fill="#a86450" opacity=".75" filter="url(#b12)"/><ellipse cx="1100" cy="606" rx="13" ry="8" fill="#6a382c" filter="url(#b6)"/><ellipse cx="1165" cy="606" rx="13" ry="8" fill="#6a382c" filter="url(#b6)"/><path d="M1010 690C1030 630 1090 610 1135 612C1180 610 1240 632 1262 690C1280 770 1240 850 1135 868C1030 850 990 770 1010 690Z" fill="#6e4c3e" opacity=".92" filter="url(#b12)"/><ellipse cx="1135" cy="690" rx="92" ry="36" fill="#bd7c6a" filter="url(#b6)"/><path d="M1050 688C1090 700 1180 700 1222 686" fill="none" stroke="#8a4a40" stroke-width="9" filter="url(#b6)"/><ellipse cx="1135" cy="740" rx="50" ry="16" fill="#8c5a4a" opacity=".8" filter="url(#b6)"/></g></g></g><rect x="60" y="34.8" width="498.900" height="286.200" fill="none" stroke="#e3940c" stroke-width="1.500"/><text x="163" y="362" font-family="Liberation Sans, sans-serif" font-size="38" textLength="286" lengthAdjust="spacingAndGlyphs" stroke-width=".300"><tspan fill="#fff">CRA</tspan><tspan fill="#f4a315">ZY THUN</tspan><tspan fill="#fff">DERBIRD</tspan></text></svg>
<div class="dt" style="left:0px;top:59px;width:382px"><span>Streaminformation</span></div>
<svg class="a" style="left:330px;top:67px" width="20" height="20" viewBox="0 0 20 20"><g fill="none" stroke="#d0d1d6" stroke-width="1.5"><rect x="0.9" y="1.2" width="12.6" height="10.4" rx="1.2"/><path d="M0.9 2.4h12.6" stroke-width="2.6"/><rect x="6.9" y="9.2" width="12.3" height="10" rx="1.2" fill="#3c404b"/><path d="M6.9 10.4h12.3" stroke-width="2.6"/></g></svg>
<svg class="a" style="left:361.5px;top:71.5px" width="11" height="11" viewBox="0 0 11 11"><path d="M1.2 1.2L9.8 9.8M9.8 1.2L1.2 9.8" stroke="#fefefe" stroke-width="2.5" stroke-linecap="square"/></svg>
<div class="a" style="left:0;top:95px;width:382px;height:844px;background:#5c16c5"></div>
<div class="a" style="left:0;top:939px;width:382px;height:839px;background:#1f1f23"></div>
<div class="a twh" style="left:37.6px;top:120.5px;font-size:22.5px;line-height:27px;letter-spacing:-.42px"><span style="letter-spacing:-0.399px">Welche Cookies dürfen es</span><br><span style="letter-spacing:-0.649px">denn sein?</span></div>
<div class="a tw" style="left:37.6px;top:179.7px"><span style="letter-spacing:0.627px">Twitch verwendet personenbezogene</span><br><span style="letter-spacing:0.423px">Daten, die in unseren Diensten erfasst</span><br><span style="letter-spacing:0.422px">werden, z. B. Seitenbesuche über</span><br><span style="letter-spacing:0.418px"><u>Cookies</u> und andere Gerätekennungen,</span><br><span style="letter-spacing:0.44px">um personalisierte Inhalte zu</span><br><span style="letter-spacing:0.403px">generieren, deine Präferenzen zu</span><br><span style="letter-spacing:0.505px">speichern, die Nutzung zur</span><br><span style="letter-spacing:0.466px">Verbesserung unserer Produkte zu</span><br><span style="letter-spacing:0.488px">analysieren und die Effektivität unserer</span><br><span style="letter-spacing:0.408px">Kampagnen zur Erfassung neuer</span><br><span style="letter-spacing:0.359px">Benutzer zu messen.&nbsp; Wenn du</span><br><span style="letter-spacing:0.588px">zustimmst, gestatten wir auch</span><br><span style="letter-spacing:0.626px">vertrauenswürdigen <u>Drittpartnern</u>,</span><br><span style="letter-spacing:0.416px">Daten von unseren Diensten zu erhalten</span><br><span style="letter-spacing:0.444px">oder Cookies auf deinem Gerät zu</span><br><span style="letter-spacing:0.481px">speichern und darauf zuzugreifen, um</span><br><span style="letter-spacing:0.474px">personalisierte Werbung zu schalten,</span><br><span style="letter-spacing:0.522px">die Effektivität zu messen und</span><br><span style="letter-spacing:0.43px">Erkenntnisse über die Zielgruppe zu</span><br><span style="letter-spacing:0.378px">gewinnen. In unserer <u>Erklärung zu</u></span><br><span style="letter-spacing:0.474px"><u>Cookies</u> erfährst du mehr. Durch</span><br><span style="letter-spacing:0.456px">Klicken auf "Cookies akzeptieren"</span><br><span style="letter-spacing:0.458px">stimmst du dem zu. Klicke auf "Cookies</span><br><span style="letter-spacing:0.432px">verwalten", um diese Cookies</span><br><span style="letter-spacing:0.462px">abzulehnen, mehr zu erfahren und</span><br><span style="letter-spacing:0.562px">fundiertere Entscheidungen zu treffen.</span></div>
<div class="a tw" style="left:94px;top:827px;width:195px;height:37px;border-radius:5px;background:#7234d1;text-align:center;line-height:37px;font-weight:700;letter-spacing:.1px">Cookies verwalten</div>
<div class="a tw" style="left:86px;top:877px;width:211px;height:37px;border-radius:5px;background:#fff;color:#000;text-align:center;line-height:37px;font-weight:400;letter-spacing:.55px;-webkit-text-stroke:.35px #000">Cookies akzeptieren</div>
<div class="a tw" style="left:24.8px;top:963.8px;font-weight:700;letter-spacing:.3px;color:#efeff1">Titel</div>
<div class="a" style="left:24.8px;top:995px;width:334.4px;height:90px;border-radius:5px;background:#464649"></div>
<div class="a tw" style="left:40px;top:1003.4px;color:#efeff1;letter-spacing:-.09px">WZ 2.0 <span style="letter-spacing:0;font-size:18px;line-height:0;position:relative;top:-2.6px">→</span> "INSERT CLICKBAIT HERE"</div>
<div class="a tw" style="left:200px;width:158.4px;text-align:right;top:1092.5px;color:#c9c9cf">33/140</div>
<div class="a tw" style="left:24.8px;top:1141.4px;line-height:23.8px;font-weight:700;letter-spacing:.3px;color:#efeff1">Live-<br>Benachrichtigung</div>
<div class="a tw" style="left:197.7px;top:1141.4px;line-height:23.8px;color:#bf94ff">Weitere<br>Informationen</div>
<div class="a" style="left:24.8px;top:1196px;width:334.4px;height:91px;border-radius:5px;background:#464649"></div>
<div class="a tw" style="left:40px;top:1205.3px;color:#c4c4ca;letter-spacing:.55px">crazythunderbird ist live gegangen!</div>
<div class="a tw" style="left:200px;width:158.4px;text-align:right;top:1293.3px;color:#c9c9cf">0/140</div>
<div class="a tw" style="left:24.8px;top:1342.3px;font-weight:700;letter-spacing:.3px;color:#efeff1">Kategorie</div>
<div class="a" style="left:24.8px;top:1373px;width:334.4px;height:37px;border-radius:5px;background:#464649"></div>
<svg class="a" style="left:33px;top:1381px" width="21" height="21" viewBox="0 0 21 21"><circle cx="9" cy="9" r="7" fill="none" stroke="#c4c4ca" stroke-width="2.2"/><path d="M14 14l5.2 5.2" stroke="#c4c4ca" stroke-width="2.4"/></svg>
<div class="a tw" style="left:65px;top:1379.6px;color:#efeff1;letter-spacing:.3px">Call of Duty: Warzone</div>
<div style="position:absolute;top:1423px;height:30px;border-radius:15px;background:#323235;border:1.5px solid #454549;font-family:'Liberation Sans',sans-serif;font-weight:700;font-size:15px;line-height:27px;color:#d3d3d6;text-align:center;white-space:nowrap;letter-spacing:.05px;left:24.8px;width:123px">Egoshooter<svg style="display:inline-block;vertical-align:-1.5px;margin-left:5.5px" width="10.4" height="12.3" viewBox="0 0 11 13"><rect x="0" y="5.2" width="11" height="7.8" rx="1.6" fill="#d3d3d6"/><path d="M2.6 6V4a2.9 2.9 0 0 1 5.8 0v2" fill="none" stroke="#d3d3d6" stroke-width="1.7"/></svg></div>
<div style="position:absolute;top:1423px;height:30px;border-radius:15px;background:#323235;border:1.5px solid #454549;font-family:'Liberation Sans',sans-serif;font-weight:700;font-size:15px;line-height:27px;color:#d3d3d6;text-align:center;white-space:nowrap;letter-spacing:.05px;left:154px;width:96px">Shooter<svg style="display:inline-block;vertical-align:-1.5px;margin-left:5.5px" width="10.4" height="12.3" viewBox="0 0 11 13"><rect x="0" y="5.2" width="11" height="7.8" rx="1.6" fill="#d3d3d6"/><path d="M2.6 6V4a2.9 2.9 0 0 1 5.8 0v2" fill="none" stroke="#d3d3d6" stroke-width="1.7"/></svg></div>
<div class="a twh" style="left:50.4px;top:1509px;font-size:22.5px;line-height:34px;letter-spacing:.05px;color:#efeff1"><span style="letter-spacing:0.068px">Füge Tags hinzu, damit</span><br><span style="letter-spacing:0.161px">Zuschauer dich besser</span><br><span style="letter-spacing:0.111px">finden können.</span></div>
<div class="a tw" style="left:50.4px;top:1610.5px;color:#efeff1;letter-spacing:.44px"><span style="letter-spacing:0.423px">Teile mehr über deinen Stream,</span><br><span style="letter-spacing:0.498px">sodass Leute dich entdecken, die</span><br><span style="letter-spacing:0.433px">nach Streamern wie dir suchen.</span><br><span style="letter-spacing:0.491px"><span style="color:#bf94ff">Mehr erfahren</span></span></div>
<div class="a" style="left:0;top:1750px;width:382px;height:27px;overflow:hidden">
<div class="a tw" style="left:24.8px;top:8.6px;font-weight:700;letter-spacing:.3px;color:#efeff1">Tags</div></div>
<div class="a" style="left:390px;top:1726px;width:2962px;height:50px;background:#2b2e38;border-radius:4px"></div>
<div class="a" style="left:396px;top:1741.5px;width:161px;height:24px;overflow:hidden">
<div class="t" style="left:0;top:0">Keine Quelle ausgewählt</div></div>
<div class="a" style="left:599px;top:1733px;width:157px;height:36px;border-radius:4px;background:#191b26"></div><svg width="18.5" height="18.5" viewBox="0 0 20 20" style="position:absolute;left:611.8px;top:1741.5px"><path fill="#dcdde0" fill-rule="evenodd" d="M8.14 2.53L8.20 0.16L11.80 0.16L11.86 2.53L13.97 3.40L15.69 1.77L18.23 4.31L16.60 6.03L17.47 8.14L19.84 8.20L19.84 11.80L17.47 11.86L16.60 13.97L18.23 15.69L15.69 18.23L13.97 16.60L11.86 17.47L11.80 19.84L8.20 19.84L8.14 17.47L6.03 16.60L4.31 18.23L1.77 15.69L3.40 13.97L2.53 11.86L0.16 11.80L0.16 8.20L2.53 8.14L3.40 6.03L1.77 4.31L4.31 1.77L6.03 3.40ZM10 6.1a3.9 3.9 0 1 0 0 7.8a3.9 3.9 0 1 0 0 -7.8Z"/></svg>
<div class="t" style="left:633.6px;top:1741.5px;color:#8b8d95">Eigenschaften</div>
<div class="a" style="left:762px;top:1733px;width:88px;height:36px;border-radius:4px;background:#191b26"></div><svg width="18" height="18" viewBox="0 0 18 18" style="position:absolute;left:775px;top:1742px"><rect x="1" y="1" width="16" height="16" rx="1" fill="none" stroke="#b9bac0" stroke-width="1.8"/><rect x="3.6" y="3.6" width="3.4" height="10.8" fill="#b9bac0"/><rect x="7.6" y="3.6" width="1.8" height="10.8" fill="#b9bac0" opacity=".8"/><rect x="10" y="3.6" width="1.2" height="10.8" fill="#b9bac0" opacity=".6"/><rect x="12" y="3.6" width="1" height="10.8" fill="#b9bac0" opacity=".4"/><rect x="13.6" y="3.6" width=".8" height="10.8" fill="#b9bac0" opacity=".25"/></svg>
<div class="t" style="left:796.9px;top:1741.5px;color:#8b8d95">Filter</div>
<div class="dt" style="left:3360px;top:59px;width:480px"><span>Audiomixer</span></div>
<svg class="a" style="left:3814.5px;top:67px" width="20" height="20" viewBox="0 0 20 20"><g fill="none" stroke="#d0d1d6" stroke-width="1.5"><rect x="0.9" y="1.2" width="12.6" height="10.4" rx="1.2"/><path d="M0.9 2.4h12.6" stroke-width="2.6"/><rect x="6.9" y="9.2" width="12.3" height="10" rx="1.2" fill="#3c404b"/><path d="M6.9 10.4h12.3" stroke-width="2.6"/></g></svg>
<div class="db" style="left:3360px;top:95px;width:480px;height:1004px"></div>
<div class="a" style="left:3366.4px;top:104px;width:100px;height:22px;overflow:hidden">
<div class="t" style="left:0;top:0">NDI AUX Audio</div></div>
<div class="t" style="left:3386.7000000000003px;top:130px;width:60px;text-align:center">0.0 dB</div>
<div class="a" style="left:3393.3px;top:154.0px;width:3px;height:867.8px;background:linear-gradient(to bottom,#76283a 0,#76283a 130.195px,#7a6a23 130.195px,#7a6a23 289.20000000000005px,#4c7a21 289.20000000000005px,#4c7a21 100%)"></div>
<div class="a" style="left:3397.3px;top:154.0px;width:3px;height:867.8px;background:linear-gradient(to bottom,#76283a 0,#76283a 130.195px,#7a6a23 130.195px,#7a6a23 289.20000000000005px,#4c7a21 289.20000000000005px,#4c7a21 100%)"></div>
<div class="a" style="left:3393.3px;top:607.0px;width:3px;height:414.79999999999995px;background:#7cc23a"></div>
<div class="a" style="left:3397.3px;top:607.0px;width:3px;height:414.79999999999995px;background:#7cc23a"></div>
<div class="a" style="left:3393.3px;top:580px;width:7px;height:2.500px;background:#7cc23a"></div>
<div class="a" style="left:3393.3px;top:783px;width:7px;height:2.500px;background:#0c0c0c"></div>
<div class="a" style="left:3393.3px;top:1024px;width:3px;height:3px;background:#7cc23a"></div>
<div class="a" style="left:3397.3px;top:1024px;width:3px;height:3px;background:#7cc23a"></div>
<div class="a" style="left:3400.3px;top:154.1px;width:4px;height:1px;background:#fefefe"></div>
<div class="tk" style="left:3406.5px;top:152.6px">0</div>
<div class="a" style="left:3400.3px;top:168.6px;width:2px;height:1px;background:#7a7c85"></div>
<div class="a" style="left:3400.3px;top:183.0px;width:2px;height:1px;background:#7a7c85"></div>
<div class="a" style="left:3400.3px;top:197.5px;width:2px;height:1px;background:#7a7c85"></div>
<div class="a" style="left:3400.3px;top:211.9px;width:2px;height:1px;background:#7a7c85"></div>
<div class="a" style="left:3400.3px;top:226.4px;width:4px;height:1px;background:#fefefe"></div>
<div class="tk" style="left:3404.7000000000003px;top:220.4px">-5</div>
<div class="a" style="left:3400.3px;top:240.8px;width:2px;height:1px;background:#7a7c85"></div>
<div class="a" style="left:3400.3px;top:255.3px;width:2px;height:1px;background:#7a7c85"></div>
<div class="a" style="left:3400.3px;top:269.7px;width:2px;height:1px;background:#7a7c85"></div>
<div class="a" style="left:3400.3px;top:284.2px;width:2px;height:1px;background:#7a7c85"></div>
<div class="a" style="left:3400.3px;top:298.6px;width:4px;height:1px;background:#fefefe"></div>
<div class="tk" style="left:3404.7000000000003px;top:292.6px">-10</div>
<div class="a" style="left:3400.3px;top:313.1px;width:2px;height:1px;background:#7a7c85"></div>
<div class="a" style="left:3400.3px;top:327.6px;width:2px;height:1px;background:#7a7c85"></div>
<div class="a" style="left:3400.3px;top:342.0px;width:2px;height:1px;background:#7a7c85"></div>
<div class="a" style="left:3400.3px;top:356.5px;width:2px;height:1px;background:#7a7c85"></div>
<div class="a" style="left:3400.3px;top:370.9px;width:4px;height:1px;background:#fefefe"></div>
<div class="tk" style="left:3404.7000000000003px;top:364.9px">-15</div>
<div class="a" style="left:3400.3px;top:385.4px;width:2px;height:1px;background:#7a7c85"></div>
<div class="a" style="left:3400.3px;top:399.8px;width:2px;height:1px;background:#7a7c85"></div>
<div class="a" style="left:3400.3px;top:414.3px;width:2px;height:1px;background:#7a7c85"></div>
<div class="a" style="left:3400.3px;top:428.7px;width:2px;height:1px;background:#7a7c85"></div>
<div class="a" style="left:3400.3px;top:443.2px;width:4px;height:1px;background:#fefefe"></div>
<div class="tk" style="left:3404.7000000000003px;top:437.2px">-20</div>
<div class="a" style="left:3400.3px;top:457.7px;width:2px;height:1px;background:#7a7c85"></div>
<div class="a" style="left:3400.3px;top:472.1px;width:2px;height:1px;background:#7a7c85"></div>
<div class="a" style="left:3400.3px;top:486.6px;width:2px;height:1px;background:#7a7c85"></div>
<div class="a" style="left:3400.3px;top:501.0px;width:2px;height:1px;background:#7a7c85"></div>
<div class="a" style="left:3400.3px;top:515.5px;width:4px;height:1px;background:#fefefe"></div>
<div class="tk" style="left:3404.7000000000003px;top:509.5px">-25</div>
<div class="a" style="left:3400.3px;top:529.9px;width:2px;height:1px;background:#7a7c85"></div>
<div class="a" style="left:3400.3px;top:544.4px;width:2px;height:1px;background:#7a7c85"></div>
<div class="a" style="left:3400.3px;top:558.8px;width:2px;height:1px;background:#7a7c85"></div>
<div class="a" style="left:3400.3px;top:573.3px;width:2px;height:1px;background:#7a7c85"></div>
<div class="a" style="left:3400.3px;top:587.8px;width:4px;height:1px;background:#fefefe"></div>
<div class="tk" style="left:3404.7000000000003px;top:581.8px">-30</div>
<div class="a" style="left:3400.3px;top:602.2px;width:2px;height:1px;background:#7a7c85"></div>
<div class="a" style="left:3400.3px;top:616.7px;width:2px;height:1px;background:#7a7c85"></div>
<div class="a" style="left:3400.3px;top:631.1px;width:2px;height:1px;background:#7a7c85"></div>
<div class="a" style="left:3400.3px;top:645.6px;width:2px;height:1px;background:#7a7c85"></div>
<div class="a" style="left:3400.3px;top:660.0px;width:4px;height:1px;background:#fefefe"></div>
<div class="tk" style="left:3404.7000000000003px;top:654.0px">-35</div>
<div class="a" style="left:3400.3px;top:674.5px;width:2px;height:1px;background:#7a7c85"></div>
<div class="a" style="left:3400.3px;top:688.9px;width:2px;height:1px;background:#7a7c85"></div>
<div class="a" style="left:3400.3px;top:703.4px;width:2px;height:1px;background:#7a7c85"></div>
<div class="a" style="left:3400.3px;top:717.8px;width:2px;height:1px;background:#7a7c85"></div>
<div class="a" style="left:3400.3px;top:732.3px;width:4px;height:1px;background:#fefefe"></div>
<div class="tk" style="left:3404.7000000000003px;top:726.3px">-40</div>
<div class="a" style="left:3400.3px;top:746.8px;width:2px;height:1px;background:#7a7c85"></div>
<div class="a" style="left:3400.3px;top:761.2px;width:2px;height:1px;background:#7a7c85"></div>
<div class="a" style="left:3400.3px;top:775.7px;width:2px;height:1px;background:#7a7c85"></div>
<div class="a" style="left:3400.3px;top:790.1px;width:2px;height:1px;background:#7a7c85"></div>
<div class="a" style="left:3400.3px;top:804.6px;width:4px;height:1px;background:#fefefe"></div>
<div class="tk" style="left:3404.7000000000003px;top:798.6px">-45</div>
<div class="a" style="left:3400.3px;top:819.0px;width:2px;height:1px;background:#7a7c85"></div>
<div class="a" style="left:3400.3px;top:833.5px;width:2px;height:1px;background:#7a7c85"></div>
<div class="a" style="left:3400.3px;top:847.9px;width:2px;height:1px;background:#7a7c85"></div>
<div class="a" style="left:3400.3px;top:862.4px;width:2px;height:1px;background:#7a7c85"></div>
<div class="a" style="left:3400.3px;top:876.9px;width:4px;height:1px;background:#fefefe"></div>
<div class="tk" style="left:3404.7000000000003px;top:870.9px">-50</div>
<div class="a" style="left:3400.3px;top:891.3px;width:2px;height:1px;background:#7a7c85"></div>
<div class="a" style="left:3400.3px;top:905.8px;width:2px;height:1px;background:#7a7c85"></div>
<div class="a" style="left:3400.3px;top:920.2px;width:2px;height:1px;background:#7a7c85"></div>
<div class="a" style="left:3400.3px;top:934.7px;width:2px;height:1px;background:#7a7c85"></div>
<div class="a" style="left:3400.3px;top:949.1px;width:4px;height:1px;background:#fefefe"></div>
<div class="tk" style="left:3404.7000000000003px;top:943.1px">-55</div>
<div class="a" style="left:3400.3px;top:963.6px;width:2px;height:1px;background:#7a7c85"></div>
<div class="a" style="left:3400.3px;top:978.0px;width:2px;height:1px;background:#7a7c85"></div>
<div class="a" style="left:3400.3px;top:992.5px;width:2px;height:1px;background:#7a7c85"></div>
<div class="a" style="left:3400.3px;top:1006.9px;width:2px;height:1px;background:#7a7c85"></div>
<div class="a" style="left:3400.3px;top:1021.4px;width:4px;height:1px;background:#fefefe"></div>
<div class="tk" style="left:3404.7000000000003px;top:1015.4px">-60</div>
<div class="a" style="left:3430.1000000000004px;top:160px;width:4px;height:867.7px;background:#2f88d8;border-radius:2px"></div>
<div class="a" style="left:3428.1000000000004px;top:154px;width:8.400px;height:18px;background:#fefefe;border-radius:2.500px"></div>
<div class="ib" style="left:3388.0px;top:1034px;width:31.7px;height:25.8px;background:#3c404b"><svg width="6" height="21.2" viewBox="0 0 6 21.2"><g fill="#fefefe"><circle cx="3" cy="3.1" r="2.6"/><circle cx="3" cy="10.6" r="2.6"/><circle cx="3" cy="18.1" r="2.6"/></g></svg></div>
<svg class="a" style="left:3424.7000000000003px;top:1036.200px" width="18" height="16" viewBox="0 0 18 16"><path d="M0.500 5.300h3l4.300-4v13.400l-4.300-4h-3z" fill="#fefefe"/><path d="M10 4.800a4.400 4.400 0 0 1 0 6.400M12.600 2.200a8 8 0 0 1 0 11.600" fill="none" stroke="#fefefe" stroke-width="1.600"/></svg>
<div class="a" style="left:3476.3px;top:104px;width:100.5px;height:22px;overflow:hidden">
<div class="t" style="left:0;top:0">NDI Mic Audio</div></div>
<div class="t" style="left:3496.4px;top:130px;width:60px;text-align:center">0.0 dB</div>
<div class="a" style="left:3503.0px;top:154.0px;width:3px;height:867.8px;background:linear-gradient(to bottom,#76283a 0,#76283a 130.195px,#7a6a23 130.195px,#7a6a23 289.20000000000005px,#4c7a21 289.20000000000005px,#4c7a21 100%)"></div>
<div class="a" style="left:3507.0px;top:154.0px;width:3px;height:867.8px;background:linear-gradient(to bottom,#76283a 0,#76283a 130.195px,#7a6a23 130.195px,#7a6a23 289.20000000000005px,#4c7a21 289.20000000000005px,#4c7a21 100%)"></div>
<div class="a" style="left:3503.0px;top:1024px;width:3px;height:3px;background:#4c7a21"></div>
<div class="a" style="left:3507.0px;top:1024px;width:3px;height:3px;background:#4c7a21"></div>
<div class="a" style="left:3510.0px;top:154.1px;width:4px;height:1px;background:#fefefe"></div>
<div class="tk" style="left:3516.2px;top:152.6px">0</div>
<div class="a" style="left:3510.0px;top:168.6px;width:2px;height:1px;background:#7a7c85"></div>
<div class="a" style="left:3510.0px;top:183.0px;width:2px;height:1px;background:#7a7c85"></div>
<div class="a" style="left:3510.0px;top:197.5px;width:2px;height:1px;background:#7a7c85"></div>
<div class="a" style="left:3510.0px;top:211.9px;width:2px;height:1px;background:#7a7c85"></div>
<div class="a" style="left:3510.0px;top:226.4px;width:4px;height:1px;background:#fefefe"></div>
<div class="tk" style="left:3514.4px;top:220.4px">-5</div>
<div class="a" style="left:3510.0px;top:240.8px;width:2px;height:1px;background:#7a7c85"></div>
<div class="a" style="left:3510.0px;top:255.3px;width:2px;height:1px;background:#7a7c85"></div>
<div class="a" style="left:3510.0px;top:269.7px;width:2px;height:1px;background:#7a7c85"></div>
<div class="a" style="left:3510.0px;top:284.2px;width:2px;height:1px;background:#7a7c85"></div>
<div class="a" style="left:3510.0px;top:298.6px;width:4px;height:1px;background:#fefefe"></div>
<div class="tk" style="left:3514.4px;top:292.6px">-10</div>
<div class="a" style="left:3510.0px;top:313.1px;width:2px;height:1px;background:#7a7c85"></div>
<div class="a" style="left:3510.0px;top:327.6px;width:2px;height:1px;background:#7a7c85"></div>
<div class="a" style="left:3510.0px;top:342.0px;width:2px;height:1px;background:#7a7c85"></div>
<div class="a" style="left:3510.0px;top:356.5px;width:2px;height:1px;background:#7a7c85"></div>
<div class="a" style="left:3510.0px;top:370.9px;width:4px;height:1px;background:#fefefe"></div>
<div class="tk" style="left:3514.4px;top:364.9px">-15</div>
<div class="a" style="left:3510.0px;top:385.4px;width:2px;height:1px;background:#7a7c85"></div>
<div class="a" style="left:3510.0px;top:399.8px;width:2px;height:1px;background:#7a7c85"></div>
<div class="a" style="left:3510.0px;top:414.3px;width:2px;height:1px;background:#7a7c85"></div>
<div class="a" style="left:3510.0px;top:428.7px;width:2px;height:1px;background:#7a7c85"></div>
<div class="a" style="left:3510.0px;top:443.2px;width:4px;height:1px;background:#fefefe"></div>
<div class="tk" style="left:3514.4px;top:437.2px">-20</div>
<div class="a" style="left:3510.0px;top:457.7px;width:2px;height:1px;background:#7a7c85"></div>
<div class="a" style="left:3510.0px;top:472.1px;width:2px;height:1px;background:#7a7c85"></div>
<div class="a" style="left:3510.0px;top:486.6px;width:2px;height:1px;background:#7a7c85"></div>
<div class="a" style="left:3510.0px;top:501.0px;width:2px;height:1px;background:#7a7c85"></div>
<div class="a" style="left:3510.0px;top:515.5px;width:4px;height:1px;background:#fefefe"></div>
<div class="tk" style="left:3514.4px;top:509.5px">-25</div>
<div class="a" style="left:3510.0px;top:529.9px;width:2px;height:1px;background:#7a7c85"></div>
<div class="a" style="left:3510.0px;top:544.4px;width:2px;height:1px;background:#7a7c85"></div>
<div class="a" style="left:3510.0px;top:558.8px;width:2px;height:1px;background:#7a7c85"></div>
<div class="a" style="left:3510.0px;top:573.3px;width:2px;height:1px;background:#7a7c85"></div>
<div class="a" style="left:3510.0px;top:587.8px;width:4px;height:1px;background:#fefefe"></div>
<div class="tk" style="left:3514.4px;top:581.8px">-30</div>
<div class="a" style="left:3510.0px;top:602.2px;width:2px;height:1px;background:#7a7c85"></div>
<div class="a" style="left:3510.0px;top:616.7px;width:2px;height:1px;background:#7a7c85"></div>
<div class="a" style="left:3510.0px;top:631.1px;width:2px;height:1px;background:#7a7c85"></div>
<div class="a" style="left:3510.0px;top:645.6px;width:2px;height:1px;background:#7a7c85"></div>
<div class="a" style="left:3510.0px;top:660.0px;width:4px;height:1px;background:#fefefe"></div>
<div class="tk" style="left:3514.4px;top:654.0px">-35</div>
<div class="a" style="left:3510.0px;top:674.5px;width:2px;height:1px;background:#7a7c85"></div>
<div class="a" style="left:3510.0px;top:688.9px;width:2px;height:1px;background:#7a7c85"></div>
<div class="a" style="left:3510.0px;top:703.4px;width:2px;height:1px;background:#7a7c85"></div>
<div class="a" style="left:3510.0px;top:717.8px;width:2px;height:1px;background:#7a7c85"></div>
<div class="a" style="left:3510.0px;top:732.3px;width:4px;height:1px;background:#fefefe"></div>
<div class="tk" style="left:3514.4px;top:726.3px">-40</div>
<div class="a" style="left:3510.0px;top:746.8px;width:2px;height:1px;background:#7a7c85"></div>
<div class="a" style="left:3510.0px;top:761.2px;width:2px;height:1px;background:#7a7c85"></div>
<div class="a" style="left:3510.0px;top:775.7px;width:2px;height:1px;background:#7a7c85"></div>
<div class="a" style="left:3510.0px;top:790.1px;width:2px;height:1px;background:#7a7c85"></div>
<div class="a" style="left:3510.0px;top:804.6px;width:4px;height:1px;background:#fefefe"></div>
<div class="tk" style="left:3514.4px;top:798.6px">-45</div>
<div class="a" style="left:3510.0px;top:819.0px;width:2px;height:1px;background:#7a7c85"></div>
<div class="a" style="left:3510.0px;top:833.5px;width:2px;height:1px;background:#7a7c85"></div>
<div class="a" style="left:3510.0px;top:847.9px;width:2px;height:1px;background:#7a7c85"></div>
<div class="a" style="left:3510.0px;top:862.4px;width:2px;height:1px;background:#7a7c85"></div>
<div class="a" style="left:3510.0px;top:876.9px;width:4px;height:1px;background:#fefefe"></div>
<div class="tk" style="left:3514.4px;top:870.9px">-50</div>
<div class="a" style="left:3510.0px;top:891.3px;width:2px;height:1px;background:#7a7c85"></div>
<div class="a" style="left:3510.0px;top:905.8px;width:2px;height:1px;background:#7a7c85"></div>
<div class="a" style="left:3510.0px;top:920.2px;width:2px;height:1px;background:#7a7c85"></div>
<div class="a" style="left:3510.0px;top:934.7px;width:2px;height:1px;background:#7a7c85"></div>
<div class="a" style="left:3510.0px;top:949.1px;width:4px;height:1px;background:#fefefe"></div>
<div class="tk" style="left:3514.4px;top:943.1px">-55</div>
<div class="a" style="left:3510.0px;top:963.6px;width:2px;height:1px;background:#7a7c85"></div>
<div class="a" style="left:3510.0px;top:978.0px;width:2px;height:1px;background:#7a7c85"></div>
<div class="a" style="left:3510.0px;top:992.5px;width:2px;height:1px;background:#7a7c85"></div>
<div class="a" style="left:3510.0px;top:1006.9px;width:2px;height:1px;background:#7a7c85"></div>
<div class="a" style="left:3510.0px;top:1021.4px;width:4px;height:1px;background:#fefefe"></div>
<div class="tk" style="left:3514.4px;top:1015.4px">-60</div>
<div class="a" style="left:3539.8px;top:160px;width:4px;height:867.7px;background:#2f88d8;border-radius:2px"></div>
<div class="a" style="left:3537.8px;top:154px;width:8.400px;height:18px;background:#fefefe;border-radius:2.500px"></div>
<div class="ib" style="left:3497.7px;top:1034px;width:31.7px;height:25.8px;background:#3c404b"><svg width="6" height="21.2" viewBox="0 0 6 21.2"><g fill="#fefefe"><circle cx="3" cy="3.1" r="2.6"/><circle cx="3" cy="10.6" r="2.6"/><circle cx="3" cy="18.1" r="2.6"/></g></svg></div>
<svg class="a" style="left:3534.4px;top:1036.200px" width="18" height="16" viewBox="0 0 18 16"><path d="M0.500 5.300h3l4.300-4v13.400l-4.300-4h-3z" fill="#fefefe"/><path d="M10 4.800a4.400 4.400 0 0 1 0 6.400M12.600 2.200a8 8 0 0 1 0 11.600" fill="none" stroke="#fefefe" stroke-width="1.600"/></svg>
<div class="a" style="left:3586.6px;top:104px;width:101.5px;height:22px;overflow:hidden">
<div class="t" style="left:0;top:0">NDI VOD</div></div>
<div class="t" style="left:3589.8px;top:130px;width:60px;text-align:center">0.0 dB</div>
<div class="a" style="left:3596.4px;top:154.0px;width:3px;height:867.8px;background:linear-gradient(to bottom,#76283a 0,#76283a 130.195px,#7a6a23 130.195px,#7a6a23 289.20000000000005px,#4c7a21 289.20000000000005px,#4c7a21 100%)"></div>
<div class="a" style="left:3600.4px;top:154.0px;width:3px;height:867.8px;background:linear-gradient(to bottom,#76283a 0,#76283a 130.195px,#7a6a23 130.195px,#7a6a23 289.20000000000005px,#4c7a21 289.20000000000005px,#4c7a21 100%)"></div>
<div class="a" style="left:3596.4px;top:1024px;width:3px;height:3px;background:#4c7a21"></div>
<div class="a" style="left:3600.4px;top:1024px;width:3px;height:3px;background:#4c7a21"></div>
<div class="a" style="left:3603.4px;top:154.1px;width:4px;height:1px;background:#fefefe"></div>
<div class="tk" style="left:3609.6px;top:152.6px">0</div>
<div class="a" style="left:3603.4px;top:168.6px;width:2px;height:1px;background:#7a7c85"></div>
<div class="a" style="left:3603.4px;top:183.0px;width:2px;height:1px;background:#7a7c85"></div>
<div class="a" style="left:3603.4px;top:197.5px;width:2px;height:1px;background:#7a7c85"></div>
<div class="a" style="left:3603.4px;top:211.9px;width:2px;height:1px;background:#7a7c85"></div>
<div class="a" style="left:3603.4px;top:226.4px;width:4px;height:1px;background:#fefefe"></div>
<div class="tk" style="left:3607.8px;top:220.4px">-5</div>
<div class="a" style="left:3603.4px;top:240.8px;width:2px;height:1px;background:#7a7c85"></div>
<div class="a" style="left:3603.4px;top:255.3px;width:2px;height:1px;background:#7a7c85"></div>
<div class="a" style="left:3603.4px;top:269.7px;width:2px;height:1px;background:#7a7c85"></div>
<div class="a" style="left:3603.4px;top:284.2px;width:2px;height:1px;background:#7a7c85"></div>
<div class="a" style="left:3603.4px;top:298.6px;width:4px;height:1px;background:#fefefe"></div>
<div class="tk" style="left:3607.8px;top:292.6px">-10</div>
<div class="a" style="left:3603.4px;top:313.1px;width:2px;height:1px;background:#7a7c85"></div>
<div class="a" style="left:3603.4px;top:327.6px;width:2px;height:1px;background:#7a7c85"></div>
<div class="a" style="left:3603.4px;top:342.0px;width:2px;height:1px;background:#7a7c85"></div>
<div class="a" style="left:3603.4px;top:356.5px;width:2px;height:1px;background:#7a7c85"></div>
<div class="a" style="left:3603.4px;top:370.9px;width:4px;height:1px;background:#fefefe"></div>
<div class="tk" style="left:3607.8px;top:364.9px">-15</div>
<div class="a" style="left:3603.4px;top:385.4px;width:2px;height:1px;background:#7a7c85"></div>
<div class="a" style="left:3603.4px;top:399.8px;width:2px;height:1px;background:#7a7c85"></div>
<div class="a" style="left:3603.4px;top:414.3px;width:2px;height:1px;background:#7a7c85"></div>
<div class="a" style="left:3603.4px;top:428.7px;width:2px;height:1px;background:#7a7c85"></div>
<div class="a" style="left:3603.4px;top:443.2px;width:4px;height:1px;background:#fefefe"></div>
<div class="tk" style="left:3607.8px;top:437.2px">-20</div>
<div class="a" style="left:3603.4px;top:457.7px;width:2px;height:1px;background:#7a7c85"></div>
<div class="a" style="left:3603.4px;top:472.1px;width:2px;height:1px;background:#7a7c85"></div>
<div class="a" style="left:3603.4px;top:486.6px;width:2px;height:1px;background:#7a7c85"></div>
<div class="a" style="left:3603.4px;top:501.0px;width:2px;height:1px;background:#7a7c85"></div>
<div class="a" style="left:3603.4px;top:515.5px;width:4px;height:1px;background:#fefefe"></div>
<div class="tk" style="left:3607.8px;top:509.5px">-25</div>
<div class="a" style="left:3603.4px;top:529.9px;width:2px;height:1px;background:#7a7c85"></div>
<div class="a" style="left:3603.4px;top:544.4px;width:2px;height:1px;background:#7a7c85"></div>
<div class="a" style="left:3603.4px;top:558.8px;width:2px;height:1px;background:#7a7c85"></div>
<div class="a" style="left:3603.4px;top:573.3px;width:2px;height:1px;background:#7a7c85"></div>
<div class="a" style="left:3603.4px;top:587.8px;width:4px;height:1px;background:#fefefe"></div>
<div class="tk" style="left:3607.8px;top:581.8px">-30</div>
<div class="a" style="left:3603.4px;top:602.2px;width:2px;height:1px;background:#7a7c85"></div>
<div class="a" style="left:3603.4px;top:616.7px;width:2px;height:1px;background:#7a7c85"></div>
<div class="a" style="left:3603.4px;top:631.1px;width:2px;height:1px;background:#7a7c85"></div>
<div class="a" style="left:3603.4px;top:645.6px;width:2px;height:1px;background:#7a7c85"></div>
<div class="a" style="left:3603.4px;top:660.0px;width:4px;height:1px;background:#fefefe"></div>
<div class="tk" style="left:3607.8px;top:654.0px">-35</div>
<div class="a" style="left:3603.4px;top:674.5px;width:2px;height:1px;background:#7a7c85"></div>
<div class="a" style="left:3603.4px;top:688.9px;width:2px;height:1px;background:#7a7c85"></div>
<div class="a" style="left:3603.4px;top:703.4px;width:2px;height:1px;background:#7a7c85"></div>
<div class="a" style="left:3603.4px;top:717.8px;width:2px;height:1px;background:#7a7c85"></div>
<div class="a" style="left:3603.4px;top:732.3px;width:4px;height:1px;background:#fefefe"></div>
<div class="tk" style="left:3607.8px;top:726.3px">-40</div>
<div class="a" style="left:3603.4px;top:746.8px;width:2px;height:1px;background:#7a7c85"></div>
<div class="a" style="left:3603.4px;top:761.2px;width:2px;height:1px;background:#7a7c85"></div>
<div class="a" style="left:3603.4px;top:775.7px;width:2px;height:1px;background:#7a7c85"></div>
<div class="a" style="left:3603.4px;top:790.1px;width:2px;height:1px;background:#7a7c85"></div>
<div class="a" style="left:3603.4px;top:804.6px;width:4px;height:1px;background:#fefefe"></div>
<div class="tk" style="left:3607.8px;top:798.6px">-45</div>
<div class="a" style="left:3603.4px;top:819.0px;width:2px;height:1px;background:#7a7c85"></div>
<div class="a" style="left:3603.4px;top:833.5px;width:2px;height:1px;background:#7a7c85"></div>
<div class="a" style="left:3603.4px;top:847.9px;width:2px;height:1px;background:#7a7c85"></div>
<div class="a" style="left:3603.4px;top:862.4px;width:2px;height:1px;background:#7a7c85"></div>
<div class="a" style="left:3603.4px;top:876.9px;width:4px;height:1px;background:#fefefe"></div>
<div class="tk" style="left:3607.8px;top:870.9px">-50</div>
<div class="a" style="left:3603.4px;top:891.3px;width:2px;height:1px;background:#7a7c85"></div>
<div class="a" style="left:3603.4px;top:905.8px;width:2px;height:1px;background:#7a7c85"></div>
<div class="a" style="left:3603.4px;top:920.2px;width:2px;height:1px;background:#7a7c85"></div>
<div class="a" style="left:3603.4px;top:934.7px;width:2px;height:1px;background:#7a7c85"></div>
<div class="a" style="left:3603.4px;top:949.1px;width:4px;height:1px;background:#fefefe"></div>
<div class="tk" style="left:3607.8px;top:943.1px">-55</div>
<div class="a" style="left:3603.4px;top:963.6px;width:2px;height:1px;background:#7a7c85"></div>
<div class="a" style="left:3603.4px;top:978.0px;width:2px;height:1px;background:#7a7c85"></div>
<div class="a" style="left:3603.4px;top:992.5px;width:2px;height:1px;background:#7a7c85"></div>
<div class="a" style="left:3603.4px;top:1006.9px;width:2px;height:1px;background:#7a7c85"></div>
<div class="a" style="left:3603.4px;top:1021.4px;width:4px;height:1px;background:#fefefe"></div>
<div class="tk" style="left:3607.8px;top:1015.4px">-60</div>
<div class="a" style="left:3633.2000000000003px;top:160px;width:4px;height:867.7px;background:#2f88d8;border-radius:2px"></div>
<div class="a" style="left:3631.2000000000003px;top:154px;width:8.400px;height:18px;background:#fefefe;border-radius:2.500px"></div>
<div class="ib" style="left:3591.1px;top:1034px;width:31.7px;height:25.8px;background:#3c404b"><svg width="6" height="21.2" viewBox="0 0 6 21.2"><g fill="#fefefe"><circle cx="3" cy="3.1" r="2.6"/><circle cx="3" cy="10.6" r="2.6"/><circle cx="3" cy="18.1" r="2.6"/></g></svg></div>
<svg class="a" style="left:3627.8px;top:1036.200px" width="18" height="16" viewBox="0 0 18 16"><path d="M0.500 5.300h3l4.300-4v13.400l-4.300-4h-3z" fill="#fefefe"/><path d="M10 4.800a4.400 4.400 0 0 1 0 6.400M12.600 2.200a8 8 0 0 1 0 11.600" fill="none" stroke="#fefefe" stroke-width="1.600"/></svg>
<div class="ib" style="left:3367px;top:1067px;width:30.6px;height:26.8px;background:#3c404b"><svg width="17" height="15" viewBox="0 0 17 15"><g fill="none" stroke="#fefefe"><circle cx="6" cy="9" r="3.300" stroke-width="2.200"/><circle cx="6" cy="9" r="5" stroke-width="1.600" stroke-dasharray="2 1.920"/><circle cx="13.200" cy="3.600" r="1.700" stroke-width="1.500"/><circle cx="13.200" cy="3.600" r="2.900" stroke-width="1.200" stroke-dasharray="1.300 1"/></g></svg></div>
<div class="sep" style="left:3403px;top:1070px;height:20.500px"></div>
<div class="ib" style="left:3409px;top:1067px;width:30.6px;height:26.8px;background:#3c404b"><svg width="6" height="18.2" viewBox="0 0 6 18.2"><g fill="#fefefe"><circle cx="3" cy="2.8" r="2.3"/><circle cx="3" cy="9.1" r="2.3"/><circle cx="3" cy="15.399999999999999" r="2.3"/></g></svg></div>
<div class="dt" style="left:3360px;top:1103px;width:480px"><span>Chat</span></div>
<svg class="a" style="left:3788px;top:1111px" width="20" height="20" viewBox="0 0 20 20"><g fill="none" stroke="#d0d1d6" stroke-width="1.5"><rect x="0.9" y="1.2" width="12.6" height="10.4" rx="1.2"/><path d="M0.9 2.4h12.6" stroke-width="2.6"/><rect x="6.9" y="9.2" width="12.3" height="10" rx="1.2" fill="#3c404b"/><path d="M6.9 10.4h12.3" stroke-width="2.6"/></g></svg>
<svg class="a" style="left:3819.5px;top:1115.5px" width="11" height="11" viewBox="0 0 11 11"><path d="M1.2 1.2L9.8 9.8M9.8 1.2L1.2 9.8" stroke="#fefefe" stroke-width="2.5" stroke-linecap="square"/></svg>
<div class="a" style="left:3360px;top:1139px;width:480px;height:637px;background:#5c16c5;overflow:hidden">
<div class="a twh" style="left:38px;top:25.500px;font-size:22.500px;line-height:27px;letter-spacing:-.470px">Welche Cookies dürfen es denn sein?</div>
<div class="a tw" style="left:38px;top:58.100px;letter-spacing:.540px"><span style="letter-spacing:0.536px">Twitch verwendet personenbezogene Daten, die in</span><br><span style="letter-spacing:0.402px">unseren Diensten erfasst werden, z. B.</span><br><span style="letter-spacing:0.448px">Seitenbesuche über <u>Cookies</u> und andere</span><br><span style="letter-spacing:0.411px">Gerätekennungen, um personalisierte Inhalte zu</span><br><span style="letter-spacing:0.402px">generieren, deine Präferenzen zu speichern, die</span><br><span style="letter-spacing:0.479px">Nutzung zur Verbesserung unserer Produkte zu</span><br><span style="letter-spacing:0.455px">analysieren und die Effektivität unserer Kampagnen</span><br><span style="letter-spacing:0.361px">zur Erfassung neuer Benutzer zu messen.&nbsp; Wenn du</span><br><span style="letter-spacing:0.581px">zustimmst, gestatten wir auch vertrauenswürdigen</span><br><span style="letter-spacing:0.476px"><u>Drittpartnern</u>, Daten von unseren Diensten zu</span><br><span style="letter-spacing:0.447px">erhalten oder Cookies auf deinem Gerät zu</span><br><span style="letter-spacing:0.447px">speichern und darauf zuzugreifen, um</span><br><span style="letter-spacing:0.504px">personalisierte Werbung zu schalten, die Effektivität</span><br><span style="letter-spacing:0.403px">zu messen und Erkenntnisse über die Zielgruppe zu</span><br><span style="letter-spacing:0.415px">gewinnen. In unserer <u>Erklärung zu Cookies</u> erfährst</span><br><span style="letter-spacing:0.413px">du mehr. Durch Klicken auf "Cookies akzeptieren"</span><br><span style="letter-spacing:0.449px">stimmst du dem zu. Klicke auf "Cookies verwalten",</span><br><span style="letter-spacing:0.416px">um diese Cookies abzulehnen, mehr zu erfahren und</span><br><span style="letter-spacing:0.447px">fundiertere Entscheidungen zu treffen.</span></div>
<div class="a" style="left:0;top:246.600px;width:375px;height:400px;background:#5c16c5;border-radius:0 7px 0 0;box-shadow:1px 0 2px rgba(10,0,40,.850),3px 0 9px 1px rgba(20,0,60,.450),0 -1px 3px rgba(20,0,60,.500)"></div>
<svg class="a" style="left:33.500px;top:271px" width="45" height="51.100" viewBox="0 0 44 50"><path d="M22 1.500C15 5.500 8 6.500 2 6.500c0 18 5 33 20 42c15-9 20-24 20-42c-6 0-13-1-20-5z" fill="#fff"/><path d="M19.300 11.200C15.500 12.500 11.500 13.100 8.400 13.300c.500 11.500 3.600 20.600 10.900 27z" fill="#5c16c5"/><path d="M24.700 11.200c3.800 1.300 7.800 1.900 10.900 2.100c-.500 11.500-3.600 20.600-10.900 27z" fill="#5c16c5"/></svg>
<svg class="a" style="left:328.500px;top:280px" width="13" height="13" viewBox="0 0 13 13"><path d="M1.200 1.200l10.600 10.600M11.800 1.200L1.200 11.800" stroke="#fff" stroke-width="1.900"/></svg>
<div class="a" style="left:25px;top:341px;width:45px;height:21.500px;border-radius:11px;background:#fa7fdf;color:#000;font-family:'Liberation Sans',sans-serif;font-size:12.500px;line-height:22.500px;text-align:center;letter-spacing:.300px">NEU</div>
<div class="a twh" style="left:76.600px;top:335px;font-size:22.500px;line-height:29.300px;letter-spacing:-.100px">Abwehrmodus-</div>
<div class="a twh" style="left:25px;top:364.300px;font-size:22.500px;line-height:29.300px;letter-spacing:-.100px">Verknüpfung</div>
<div class="a tw" style="left:25px;top:393.400px;letter-spacing:.510px"><span style="letter-spacing:0.501px">Der Abwehrmodus ist ein Tool, das</span><br><span style="letter-spacing:0.474px">es dir erlaubt, starke</span><br><span style="letter-spacing:0.491px">Sicherheitseinstellungen</span><br><span style="letter-spacing:0.527px">vorzubereiten und diese bei Bedarf</span><br><span style="letter-spacing:0.418px">schnell zu aktivieren, um zu</span><br><span style="letter-spacing:0.402px">verhindern, dass auf deinem Kanal</span><br><span style="letter-spacing:0.569px">hasserfüllte Nachrichten gespammt</span><br><span style="letter-spacing:0.52px">oder du oder andere von Chattern</span><br><span style="letter-spacing:0.56px">belästigt werden.</span></div></div>
<div class="dt" style="left:0px;top:1780px;width:815px"><span>Szenen</span></div>
<svg class="a" style="left:789.5px;top:1788px" width="20" height="20" viewBox="0 0 20 20"><g fill="none" stroke="#d0d1d6" stroke-width="1.5"><rect x="0.9" y="1.2" width="12.6" height="10.4" rx="1.2"/><path d="M0.9 2.4h12.6" stroke-width="2.6"/><rect x="6.9" y="9.2" width="12.3" height="10" rx="1.2" fill="#3c404b"/><path d="M6.9 10.4h12.3" stroke-width="2.6"/></g></svg>
<div class="db" style="left:0;top:1816px;width:815px;height:254.500px"></div>
<div class="a" style="left:4px;top:1820px;width:807px;height:38px;background:#284cb8;border-radius:4px"></div>
<div class="a" style="left:10px;top:1826px;width:795px;height:26px;border:1px dotted #e6c65a"></div>
<div class="t" style="left:13px;top:1829px">Szene</div>
<div class="ib" style="left:6.7px;top:2039px;width:31px;height:27px;background:#3c404b"><svg width="15" height="15" viewBox="0 0 15 15"><path d="M7.5 .3v14.4M.3 7.5h14.4" stroke="#fefefe" stroke-width="2.3" fill="none"/></svg></div>
<div class="ib" style="left:42px;top:2039px;width:31px;height:27px;background:#3c404b"><svg width="16" height="17" viewBox="0 0 16 17"><g fill="none" stroke="#fefefe"><path d="M.3 2.6h15.4" stroke-width="1.900"/><path d="M5 1.600c.8-1 5.200-1 6 0" stroke-width="1.600"/><path d="M2.400 4.300v9a2.400 2.400 0 0 0 2.400 2.400h6.400a2.400 2.400 0 0 0 2.400-2.400v-9" stroke-width="2.200"/><path d="M5.800 5.200v7.400M8 5.200v7.400M10.200 5.200v7.400" stroke-width="1.250"/></g></svg></div>
<div class="sep" style="left:78.3px;top:2042px;height:21px"></div>
<div class="ib" style="left:84px;top:2039px;width:31px;height:27px;background:#3c404b"><svg width="14" height="14" viewBox="0 0 18 18" style=""><rect x="1" y="1" width="16" height="16" rx="1" fill="none" stroke="#fefefe" stroke-width="1.8"/><rect x="3.6" y="3.6" width="3.4" height="10.8" fill="#fefefe"/><rect x="7.6" y="3.6" width="1.8" height="10.8" fill="#fefefe" opacity=".8"/><rect x="10" y="3.6" width="1.2" height="10.8" fill="#fefefe" opacity=".6"/><rect x="12" y="3.6" width="1" height="10.8" fill="#fefefe" opacity=".4"/><rect x="13.6" y="3.6" width=".8" height="10.8" fill="#fefefe" opacity=".25"/></svg></div>
<div class="sep" style="left:120.4px;top:2042px;height:21px"></div>
<div class="ib" style="left:126px;top:2039px;width:31px;height:27px;background:#3c404b"><svg width="16" height="10" viewBox="0 0 16 10"><path d="M1.2 8.6L8 1.800l6.800 6.800" stroke="#fefefe" stroke-width="2" fill="none"/></svg></div>
<div class="ib" style="left:161px;top:2039px;width:31px;height:27px;background:#3c404b"><svg width="16" height="10" viewBox="0 0 16 10"><path d="M1.2 1.400L8 8.200l6.800-6.800" stroke="#fefefe" stroke-width="2" fill="none"/></svg></div>
<div class="dt" style="left:819px;top:1780px;width:372px"><span>Quellen</span></div>
<svg class="a" style="left:1165.5px;top:1788px" width="20" height="20" viewBox="0 0 20 20"><g fill="none" stroke="#d0d1d6" stroke-width="1.5"><rect x="0.9" y="1.2" width="12.6" height="10.4" rx="1.2"/><path d="M0.9 2.4h12.6" stroke-width="2.6"/><rect x="6.9" y="9.2" width="12.3" height="10" rx="1.2" fill="#3c404b"/><path d="M6.9 10.4h12.3" stroke-width="2.6"/></g></svg>
<div class="db" style="left:819px;top:1816px;width:372px;height:254.500px"></div>
<svg class="a" style="left:833.5px;top:1831.0px" width="13" height="15" viewBox="0 0 13 15"><path d="M1.200 2.800a1.600 1.600 0 0 1 1.600-1.600h4.800l4.200 4.200v6.800a1.600 1.600 0 0 1 -1.600 1.600h-7.400a1.600 1.600 0 0 1 -1.600-1.600z" fill="none" stroke="#fefefe" stroke-width="2.100"/><path d="M7.400 1v4.600h4.600z" fill="#fefefe"/></svg>
<div class="t" style="left:857.500px;top:1828.6px">NDI VOD</div>
<svg class="a" style="left:1128px;top:1832.3px" width="16" height="13" viewBox="0 0 16 13"><path d="M0.200 6.500C2 2.700 4.800 0.400 8 0.400s6 2.300 7.800 6.100c-1.800 3.800-4.600 6.100-7.800 6.100s-6-2.300-7.800-6.100z" fill="#fefefe"/><circle cx="8" cy="6.500" r="3.800" fill="#2b2e38"/><circle cx="8" cy="6.500" r="2" fill="#fefefe"/></svg>
<svg class="a" style="left:1159.7px;top:1829.8999999999999px" width="13" height="16" viewBox="0 0 13 16"><rect x="0.300" y="8.600" width="12.200" height="7.200" rx=".800" fill="#9d9b96"/><path d="M4.900 6.600V5.200a3.100 3.100 0 0 1 6.200 0v3.600" fill="none" stroke="#9d9b96" stroke-width="2.100"/></svg>
<svg class="a" style="left:833.5px;top:1867.0px" width="13" height="15" viewBox="0 0 13 15"><path d="M1.200 2.800a1.600 1.600 0 0 1 1.600-1.600h4.800l4.200 4.200v6.800a1.600 1.600 0 0 1 -1.600 1.600h-7.400a1.600 1.600 0 0 1 -1.600-1.600z" fill="none" stroke="#fefefe" stroke-width="2.100"/><path d="M7.400 1v4.600h4.600z" fill="#fefefe"/></svg>
<div class="t" style="left:857.500px;top:1864.6px">NDI AUX Audio</div>
<svg class="a" style="left:1128px;top:1868.3px" width="16" height="13" viewBox="0 0 16 13"><path d="M0.200 6.500C2 2.700 4.800 0.400 8 0.400s6 2.300 7.800 6.100c-1.800 3.800-4.600 6.100-7.800 6.100s-6-2.300-7.800-6.100z" fill="#fefefe"/><circle cx="8" cy="6.500" r="3.800" fill="#2b2e38"/><circle cx="8" cy="6.500" r="2" fill="#fefefe"/></svg>
<svg class="a" style="left:1159.7px;top:1865.8999999999999px" width="13" height="16" viewBox="0 0 13 16"><rect x="0.300" y="8.600" width="12.200" height="7.200" rx=".800" fill="#9d9b96"/><path d="M4.900 6.600V5.200a3.100 3.100 0 0 1 6.200 0v3.600" fill="none" stroke="#9d9b96" stroke-width="2.100"/></svg>
<svg class="a" style="left:833.5px;top:1903.0px" width="13" height="15" viewBox="0 0 13 15"><path d="M1.200 2.800a1.600 1.600 0 0 1 1.600-1.600h4.800l4.200 4.200v6.800a1.600 1.600 0 0 1 -1.600 1.600h-7.400a1.600 1.600 0 0 1 -1.600-1.600z" fill="none" stroke="#fefefe" stroke-width="2.100"/><path d="M7.400 1v4.600h4.600z" fill="#fefefe"/></svg>
<div class="t" style="left:857.500px;top:1900.6px">NDI Mic Audio</div>
<svg class="a" style="left:1128px;top:1904.3px" width="16" height="13" viewBox="0 0 16 13"><path d="M0.200 6.500C2 2.700 4.800 0.400 8 0.400s6 2.300 7.800 6.100c-1.800 3.800-4.600 6.100-7.800 6.100s-6-2.300-7.800-6.100z" fill="#fefefe"/><circle cx="8" cy="6.500" r="3.800" fill="#2b2e38"/><circle cx="8" cy="6.500" r="2" fill="#fefefe"/></svg>
<svg class="a" style="left:1159.7px;top:1901.8999999999999px" width="13" height="16" viewBox="0 0 13 16"><rect x="0.300" y="8.600" width="12.200" height="7.200" rx=".800" fill="#9d9b96"/><path d="M4.900 6.600V5.200a3.100 3.100 0 0 1 6.200 0v3.600" fill="none" stroke="#9d9b96" stroke-width="2.100"/></svg>
<svg class="a" style="left:833.5px;top:1939.0px" width="13" height="15" viewBox="0 0 13 15"><path d="M1.200 2.800a1.600 1.600 0 0 1 1.600-1.600h4.800l4.200 4.200v6.800a1.600 1.600 0 0 1 -1.600 1.600h-7.400a1.600 1.600 0 0 1 -1.600-1.600z" fill="none" stroke="#fefefe" stroke-width="2.100"/><path d="M7.400 1v4.600h4.600z" fill="#fefefe"/></svg>
<div class="t" style="left:857.500px;top:1936.6px">NDI Video</div>
<svg class="a" style="left:1128px;top:1940.3px" width="16" height="13" viewBox="0 0 16 13"><path d="M0.200 6.500C2 2.700 4.800 0.400 8 0.400s6 2.300 7.800 6.100c-1.800 3.800-4.600 6.100-7.800 6.100s-6-2.300-7.800-6.100z" fill="#fefefe"/><circle cx="8" cy="6.500" r="3.800" fill="#2b2e38"/><circle cx="8" cy="6.500" r="2" fill="#fefefe"/></svg>
<svg class="a" style="left:1159.7px;top:1937.8999999999999px" width="13" height="16" viewBox="0 0 13 16"><rect x="0.300" y="8.600" width="12.200" height="7.200" rx=".800" fill="#9d9b96"/><path d="M4.900 6.600V5.200a3.100 3.100 0 0 1 6.200 0v3.600" fill="none" stroke="#9d9b96" stroke-width="2.100"/></svg>
<div class="ib" style="left:825.7px;top:2039px;width:31px;height:27px;background:#3c404b"><svg width="15" height="15" viewBox="0 0 15 15"><path d="M7.5 .3v14.4M.3 7.5h14.4" stroke="#fefefe" stroke-width="2.3" fill="none"/></svg></div>
<div class="ib" style="left:861px;top:2039px;width:31px;height:27px;background:#191b26"><svg width="16" height="17" viewBox="0 0 16 17"><g fill="none" stroke="#fefefe"><path d="M.3 2.6h15.4" stroke-width="1.900"/><path d="M5 1.600c.8-1 5.200-1 6 0" stroke-width="1.600"/><path d="M2.400 4.300v9a2.400 2.400 0 0 0 2.400 2.400h6.400a2.400 2.400 0 0 0 2.400-2.400v-9" stroke-width="2.200"/><path d="M5.800 5.200v7.400M8 5.200v7.400M10.200 5.200v7.400" stroke-width="1.250"/></g></svg></div>
<div class="sep" style="left:897.3px;top:2042px;height:21px"></div>
<div class="ib" style="left:903px;top:2039px;width:31px;height:27px;background:#191b26"><svg width="15" height="15" viewBox="0 0 20 20" style=""><path fill="#fefefe" fill-rule="evenodd" d="M8.14 2.53L8.20 0.16L11.80 0.16L11.86 2.53L13.97 3.40L15.69 1.77L18.23 4.31L16.60 6.03L17.47 8.14L19.84 8.20L19.84 11.80L17.47 11.86L16.60 13.97L18.23 15.69L15.69 18.23L13.97 16.60L11.86 17.47L11.80 19.84L8.20 19.84L8.14 17.47L6.03 16.60L4.31 18.23L1.77 15.69L3.40 13.97L2.53 11.86L0.16 11.80L0.16 8.20L2.53 8.14L3.40 6.03L1.77 4.31L4.31 1.77L6.03 3.40ZM10 6.1a3.9 3.9 0 1 0 0 7.8a3.9 3.9 0 1 0 0 -7.8Z"/></svg></div>
<div class="sep" style="left:939.4px;top:2042px;height:21px"></div>
<div class="ib" style="left:945px;top:2039px;width:31px;height:27px;background:#191b26"><svg width="16" height="10" viewBox="0 0 16 10"><path d="M1.2 8.6L8 1.800l6.800 6.800" stroke="#fefefe" stroke-width="2" fill="none"/></svg></div>
<div class="ib" style="left:980px;top:2039px;width:31px;height:27px;background:#191b26"><svg width="16" height="10" viewBox="0 0 16 10"><path d="M1.2 1.400L8 8.200l6.800-6.800" stroke="#fefefe" stroke-width="2" fill="none"/></svg></div>
<div class="dt" style="left:1195px;top:1780px;width:307px"><span>Szenenübergänge</span></div>
<svg class="a" style="left:1476.5px;top:1788px" width="20" height="20" viewBox="0 0 20 20"><g fill="none" stroke="#d0d1d6" stroke-width="1.5"><rect x="0.9" y="1.2" width="12.6" height="10.4" rx="1.2"/><path d="M0.9 2.4h12.6" stroke-width="2.6"/><rect x="6.9" y="9.2" width="12.3" height="10" rx="1.2" fill="#3c404b"/><path d="M6.9 10.4h12.3" stroke-width="2.6"/></g></svg>
<div class="db" style="left:1195px;top:1816px;width:307px;height:254.500px"></div>
<div class="a" style="left:1202px;top:1822px;width:293px;height:34px;background:#3c404b;border-radius:4px"></div>
<div class="a" style="left:1473.500px;top:1822px;width:1px;height:34px;background:#272a33"></div>
<div class="t" style="left:1212px;top:1829.500px">Überblende</div>
<svg class="a" style="left:1480.500px;top:1830.500px" width="9" height="17" viewBox="0 0 9 17"><path d="M1.300 5.300L4.500 2l3.200 3.300M1.300 11.700L4.500 15l3.200-3.300" fill="none" stroke="#d0d1d6" stroke-width="1.200"/></svg>
<div class="t" style="left:1200.700px;top:1870.500px">Dauer</div>
<div class="a" style="left:1252px;top:1862px;width:243px;height:35.500px;background:#3c404b;border-radius:4px"></div>
<div class="t" style="left:1261px;top:1869.500px">300 ms</div>
<svg class="a" style="left:1476px;top:1866.500px" width="13" height="27" viewBox="0 0 13 27"><path d="M1.500 8.200L6.500 3.200l5 5M1.500 18.800l5 5l5-5" fill="none" stroke="#fefefe" stroke-width="1.500"/></svg>
<div class="ib" style="left:1371px;top:1903px;width:36px;height:28px;background:#3c404b"><svg width="18.5" height="18.5" viewBox="0 0 15 15"><path d="M7.5 .3v14.4M.3 7.5h14.4" stroke="#fefefe" stroke-width="2.3" fill="none"/></svg></div>
<div class="ib" style="left:1415px;top:1903px;width:36px;height:28px;background:#191b26"><svg width="19.68" height="20.91" viewBox="0 0 16 17"><g fill="none" stroke="#d6d8e2"><path d="M.3 2.6h15.4" stroke-width="1.900"/><path d="M5 1.600c.8-1 5.200-1 6 0" stroke-width="1.600"/><path d="M2.400 4.300v9a2.400 2.400 0 0 0 2.400 2.400h6.400a2.400 2.400 0 0 0 2.400-2.400v-9" stroke-width="2.200"/><path d="M5.800 5.200v7.400M8 5.200v7.400M10.200 5.200v7.400" stroke-width="1.250"/></g></svg></div>
<div class="ib" style="left:1459px;top:1903px;width:36px;height:28px;background:#191b26"><svg width="6" height="22.0" viewBox="0 0 6 22.0"><g fill="#c8cad6"><circle cx="3" cy="3.5" r="3"/><circle cx="3" cy="11.0" r="3"/><circle cx="3" cy="18.5" r="3"/></g></svg></div>
<div class="dt" style="left:1506px;top:1780px;width:1750px"><span>Statistiken</span></div>
<svg class="a" style="left:3204px;top:1788px" width="20" height="20" viewBox="0 0 20 20"><g fill="none" stroke="#d0d1d6" stroke-width="1.5"><rect x="0.9" y="1.2" width="12.6" height="10.4" rx="1.2"/><path d="M0.9 2.4h12.6" stroke-width="2.6"/><rect x="6.9" y="9.2" width="12.3" height="10" rx="1.2" fill="#3c404b"/><path d="M6.9 10.4h12.3" stroke-width="2.6"/></g></svg>
<svg class="a" style="left:3235.5px;top:1792.5px" width="11" height="11" viewBox="0 0 11 11"><path d="M1.2 1.2L9.8 9.8M9.8 1.2L1.2 9.8" stroke="#fefefe" stroke-width="2.5" stroke-linecap="square"/></svg>
<div class="db" style="left:1506px;top:1816px;width:1750px;height:254.500px"></div>
<div class="t" style="left:1517px;top:1829.5px">CPU-Auslastung</div>
<div class="t" style="left:1951px;top:1829.5px">0.73%</div>
<div class="t" style="left:2384px;top:1829.5px">FPS</div>
<div class="t" style="left:2818px;top:1829.5px">60.00</div>
<div class="t" style="left:1517px;top:1860.5px">Speicherplatz verfügbar</div>
<div class="t" style="left:1951px;top:1860.5px">2.5 TB</div>
<div class="t" style="left:2384px;top:1860.5px">Durchschnittliche Framerenderzeit</div>
<div class="t" style="left:2818px;top:1860.5px">2.9 ms</div>
<div class="t" style="left:1517px;top:1891.5px">Datenträger voll in ungefähr</div>
<div class="t" style="left:1951px;top:1891.5px"></div>
<div class="t" style="left:2384px;top:1891.5px">Ausgelassene Frames durch Renderverzögerung</div>
<div class="t" style="left:2818px;top:1891.5px">0 / 1086 (0.0%)</div>
<div class="t" style="left:1517px;top:1922.5px">Speicherauslastung</div>
<div class="t" style="left:1951px;top:1922.5px">310.0 MB</div>
<div class="t" style="left:2384px;top:1922.5px">Übersprungene Frames durch Codierungsverzögerung</div>
<div class="t" style="left:2818px;top:1922.5px">0 / 0 (0.0%)</div>
<div class="a" style="left:1518px;top:1952px;width:1712px;height:67.500px;background:#1f212a"></div>
<div class="t b" style="left:1529px;top:1965.500px">Ausgabe</div>
<div class="t" style="left:1529px;top:1996.500px">Stream</div>
<div class="t b" style="left:1868px;top:1965.500px">Status</div>
<div class="t" style="left:1868px;top:1996.500px">Inaktiv</div>
<div class="t b" style="left:2208px;top:1965.500px">Ausgelassene Frames (Netzwerk)</div>
<div class="t" style="left:2208px;top:1996.500px">0 / 0 (0.0%)</div>
<div class="t b" style="left:2547px;top:1965.500px">Insgesamte Datenausgabe</div>
<div class="t" style="left:2547px;top:1996.500px">0.0 MB</div>
<div class="t b" style="left:2887.4px;top:1965.500px">Bitrate</div>
<div class="t" style="left:2887.4px;top:1996.500px">0 kb/s</div>
<div class="a" style="left:3232px;top:1954px;width:10px;height:37.500px;background:#3c404b;border-radius:2px"></div>
<div class="btn" style="left:3105px;top:2029px;width:138px;height:29.500px;line-height:32px">Zurücksetzen</div>
<div class="dt" style="left:3260px;top:1780px;width:580px"><span>Steuerung</span></div>
<svg class="a" style="left:3814.5px;top:1788px" width="20" height="20" viewBox="0 0 20 20"><g fill="none" stroke="#d0d1d6" stroke-width="1.5"><rect x="0.9" y="1.2" width="12.6" height="10.4" rx="1.2"/><path d="M0.9 2.4h12.6" stroke-width="2.6"/><rect x="6.9" y="9.2" width="12.3" height="10" rx="1.2" fill="#3c404b"/><path d="M6.9 10.4h12.3" stroke-width="2.6"/></g></svg>
<div class="db" style="left:3260px;top:1816px;width:580px;height:254.500px"></div>
<div class="btn" style="left:3265px;top:1821px;width:570px;height:42.7px;line-height:45.300000000000004px">Stream starten</div>
<div class="btn" style="left:3265px;top:1868.6px;width:570px;height:41.1px;line-height:43.7px">Aufnahme starten</div>
<div class="btn" style="left:3265px;top:1914px;width:529.6px;height:35.4px;line-height:38.0px">Virtuelle Kamera starten</div>
<div class="btn" style="left:3265px;top:1954px;width:570px;height:34.4px;line-height:37.0px">Studio-Modus</div>
<div class="btn" style="left:3265px;top:1993px;width:570px;height:33.6px;line-height:36.2px">Einstellungen</div>
<div class="btn" style="left:3265px;top:2031px;width:570px;height:34.4px;line-height:37.0px">Beenden</div>
<div class="ib" style="left:3799px;top:1914px;width:36px;height:35.4px;background:#3c404b"><svg width="19" height="19" viewBox="0 0 20 20" style=""><path fill="#fefefe" fill-rule="evenodd" d="M8.14 2.53L8.20 0.16L11.80 0.16L11.86 2.53L13.97 3.40L15.69 1.77L18.23 4.31L16.60 6.03L17.47 8.14L19.84 8.20L19.84 11.80L17.47 11.86L16.60 13.97L18.23 15.69L15.69 18.23L13.97 16.60L11.86 17.47L11.80 19.84L8.20 19.84L8.14 17.47L6.03 16.60L4.31 18.23L1.77 15.69L3.40 13.97L2.53 11.86L0.16 11.80L0.16 8.20L2.53 8.14L3.40 6.03L1.77 4.31L4.31 1.77L6.03 3.40ZM10 6.1a3.9 3.9 0 1 0 0 7.8a3.9 3.9 0 1 0 0 -7.8Z"/></svg></div>
<svg class="a" style="left:3311.500px;top:2077.500px" width="21" height="16" viewBox="0 0 21 16"><g fill="none" stroke="#9b9b99" stroke-width="1.500"><path d="M6.300 3.600a6.200 6.200 0 0 0 0 8.800M14.700 3.600a6.200 6.200 0 0 1 0 8.800"/><path d="M3.500 1.200a9.800 9.800 0 0 0 0 13.600M17.500 1.200a9.800 9.800 0 0 1 0 13.600"/></g><circle cx="10.500" cy="8" r="3.100" fill="#9b9b99"/><path d="M3.200 15.800L18.200 1.300" stroke="#1f212a" stroke-width="1.400"/><path d="M2.200 15L17.200 .500" stroke="#9b9b99" stroke-width="1.500"/></svg>
<div class="t" style="left:3338.400px;top:2076.300px">LIVE: 00:00:00</div>
<svg class="a" style="left:3459px;top:2079.500px" width="14" height="13" viewBox="0 0 14 13"><circle cx="6.700" cy="6.600" r="5" fill="#9b9b99"/><path d="M1.600 12.400L12.700 1.400" stroke="#1f212a" stroke-width="1.300"/><path d="M.700 11.600L11.800 .600" stroke="#9b9b99" stroke-width="1.300"/></svg>
<div class="t" style="left:3482.600px;top:2076.300px">REC: 00:00:00</div>
<div class="t" style="left:3618.500px;top:2076.300px">CPU: 0.7%, 60.00 fps</div>
</body></html>
